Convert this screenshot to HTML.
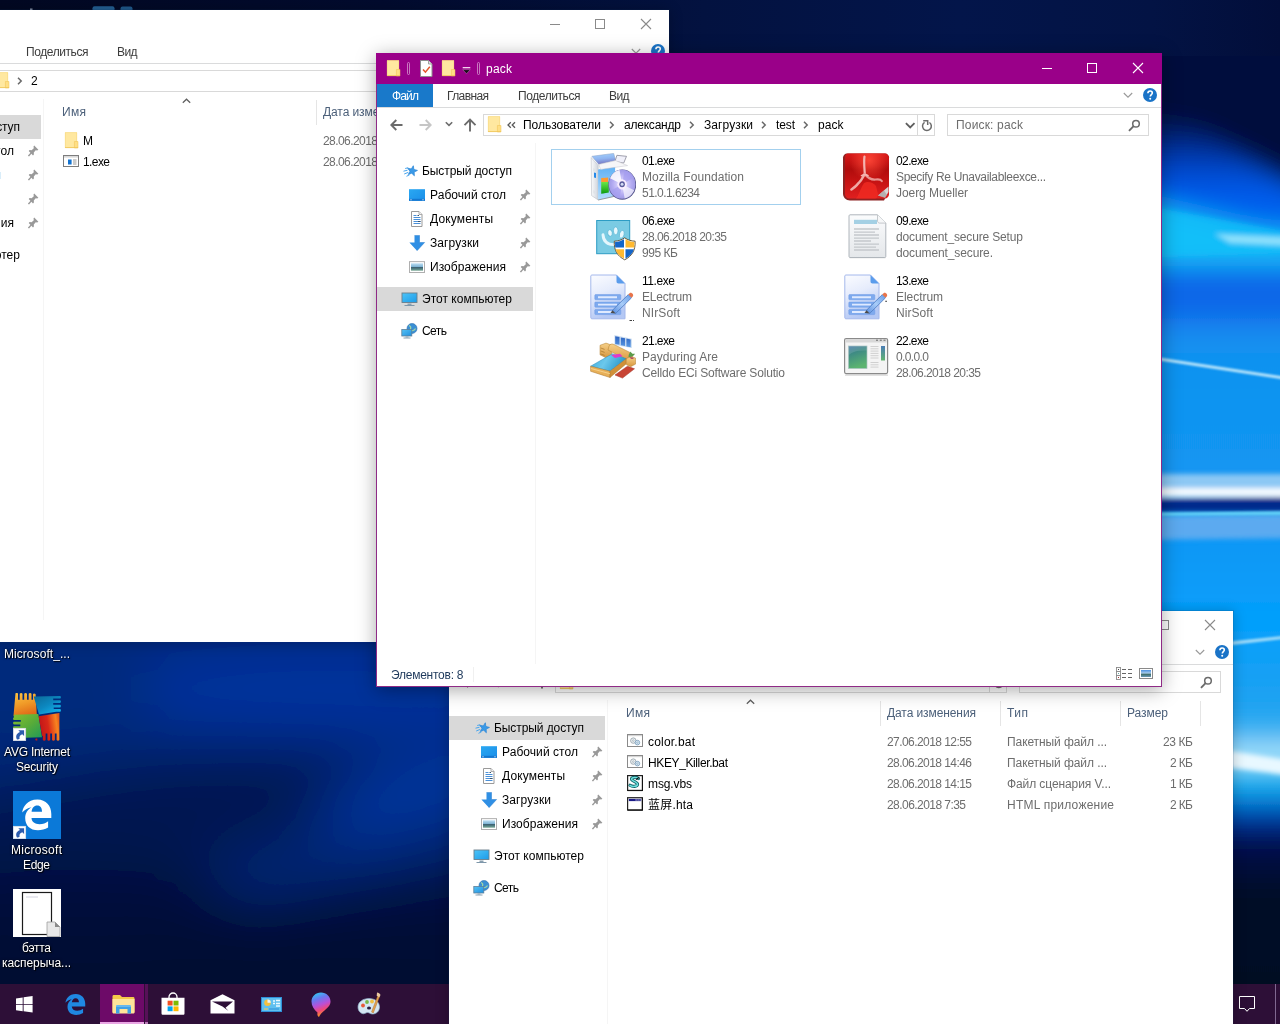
<!DOCTYPE html>
<html lang="ru">
<head>
<meta charset="utf-8">
<title>Desktop</title>
<style>
html,body{margin:0;padding:0;background:#03082a;}
body{width:1280px;height:1024px;overflow:hidden;font-family:"Liberation Sans","Noto Sans CJK SC",sans-serif;font-size:12px;}
#screen{position:relative;width:1280px;height:1024px;overflow:hidden;}
#screen div,#screen span.t,#screen svg.i{position:absolute;}
span.t{will-change:transform;white-space:nowrap;line-height:16px;font-size:12px;color:#000;}
.win{background:#fff;overflow:hidden;}
.dt{color:#fff;text-shadow:1px 1px 2px rgba(0,0,0,.9),0 0 3px rgba(0,0,0,.6);}

</style>
</head>
<body>
<div id="screen">
<svg class="i" style="left:0;top:0" width="1280" height="1024" viewBox="0 0 1280 1024">
<defs>
<linearGradient id="wl" gradientUnits="userSpaceOnUse" x1="0" y1="0" x2="0" y2="1024">
<stop offset="0" stop-color="#03092c"/><stop offset="0.05" stop-color="#030b33"/>
<stop offset="0.62" stop-color="#04287c"/><stop offset="0.66" stop-color="#042d88"/>
<stop offset="0.76" stop-color="#042572"/><stop offset="0.84" stop-color="#03154c"/>
<stop offset="0.90" stop-color="#020b36"/><stop offset="1" stop-color="#020930"/></linearGradient>
<linearGradient id="wt" x1="0" y1="0" x2="1" y2="0">
<stop offset="0" stop-color="#020822"/><stop offset="0.3" stop-color="#020b2e"/>
<stop offset="0.55" stop-color="#031240"/><stop offset="0.75" stop-color="#03154a"/>
<stop offset="0.9" stop-color="#031344"/><stop offset="1" stop-color="#020e3a"/></linearGradient>
<linearGradient id="wr" gradientUnits="userSpaceOnUse" x1="0" y1="0" x2="0" y2="1024">
<stop offset="0" stop-color="#031240"/><stop offset="0.10" stop-color="#03113e"/>
<stop offset="0.122" stop-color="#031a5a"/><stop offset="0.146" stop-color="#03309a"/>
<stop offset="0.166" stop-color="#0448cc"/><stop offset="0.190" stop-color="#055cec"/>
<stop offset="0.218" stop-color="#0562ee"/><stop offset="0.228" stop-color="#10b0f6"/>
<stop offset="0.244" stop-color="#14b8f6"/><stop offset="0.256" stop-color="#0c80ec"/>
<stop offset="0.266" stop-color="#0868e8"/><stop offset="0.305" stop-color="#0868e8"/>
<stop offset="0.325" stop-color="#1c8ef0"/><stop offset="0.345" stop-color="#1092f0"/>
<stop offset="0.46" stop-color="#1296f2"/><stop offset="0.54" stop-color="#0c98f6"/>
<stop offset="0.61" stop-color="#04a0fc"/><stop offset="0.66" stop-color="#16a0f4"/><stop offset="0.70" stop-color="#22a4f0"/>
<stop offset="0.725" stop-color="#58c0f4"/>
<stop offset="0.738" stop-color="#e0f6ff"/><stop offset="0.75" stop-color="#30c4f6"/>
<stop offset="0.775" stop-color="#089ce8"/><stop offset="0.795" stop-color="#0440b0"/>
<stop offset="0.82" stop-color="#021050"/><stop offset="0.87" stop-color="#020928"/>
<stop offset="1" stop-color="#020622"/></linearGradient>
<filter id="b15" filterUnits="userSpaceOnUse" x="-400" y="-400" width="2100" height="1850"><feGaussianBlur stdDeviation="12"/></filter>
<filter id="b3" filterUnits="userSpaceOnUse" x="-400" y="-400" width="2100" height="1850"><feGaussianBlur stdDeviation="2.5"/></filter>
<filter id="b1" filterUnits="userSpaceOnUse" x="-400" y="-400" width="2100" height="1850"><feGaussianBlur stdDeviation="0.8"/></filter>
<filter id="b30" filterUnits="userSpaceOnUse" x="-400" y="-400" width="2100" height="1850"><feGaussianBlur stdDeviation="28"/></filter>
</defs>
<rect x="0" y="0" width="1280" height="1024" fill="url(#wl)"/>
<rect x="0" y="0" width="1280" height="70" fill="url(#wt)"/>
<rect x="92.5" y="6.3" width="22" height="5" rx="2" fill="#235f92"/><rect x="120.5" y="6.5" width="12" height="5" rx="2" fill="#1f588a"/><rect x="30" y="8.5" width="2.5" height="2" fill="#8a93a8"/>
<svg x="0" y="600" width="470" height="424" viewBox="0 600 470 424">
<g filter="url(#b30)">
<rect x="-300" y="300" width="1100" height="1000" fill="url(#wl)"/>
<ellipse cx="330" cy="690" rx="220" ry="45" fill="#04339c"/>
<ellipse cx="40" cy="690" rx="110" ry="50" fill="#04297c"/>
<ellipse cx="140" cy="800" rx="230" ry="36" fill="#03174f" transform="rotate(-8 140 800)"/>
<ellipse cx="420" cy="790" rx="110" ry="30" fill="#05369e" transform="rotate(-15 420 790)"/>
<ellipse cx="330" cy="862" rx="200" ry="20" fill="#052a80" transform="rotate(-12 330 862)"/>
<ellipse cx="80" cy="900" rx="160" ry="30" fill="#020d3a"/>
<ellipse cx="230" cy="990" rx="400" ry="45" fill="#020a32"/>
</g>
</svg>
<svg x="1150" y="56" width="130" height="968" viewBox="1150 56 130 968">
<g filter="url(#b15)">
<rect x="900" y="-200" width="700" height="1500" fill="url(#wr)"/>
<polygon points="1100,-100 1400,-100 1400,250 1200,132 1100,108" fill="#030f3c"/>
<polygon points="1100,190 1400,260 1400,266 1100,266" fill="#12b8f8"/>
<polygon points="1100,270 1400,270 1400,305 1100,305" fill="#0866e8"/>
</g>
<g filter="url(#b3)">
<polygon points="1130,203 1310,236 1310,252 1130,258" fill="#16c2fa" opacity=".7"/>
<polygon points="1215,234 1310,238 1310,247 1230,243" fill="#d8f8ff" opacity=".6"/>
<polygon points="1130,474 1310,474 1310,490 1130,490" fill="#8cc8f4"/>
<polygon points="1130,488 1310,488 1310,497 1130,497" fill="#f4faff"/>
<polygon points="1130,499 1310,497 1310,512 1130,512" fill="#022a8c"/>
<polygon points="1130,516 1310,514 1310,538 1130,540" fill="#5caaf0"/>
</g>
<g filter="url(#b1)">
<polygon points="1130,353 1310,380.5 1310,383.5 1130,356" fill="#b8e4fb"/>
<polygon points="1130,513 1310,511 1310,515 1130,516" fill="#60d0f8"/>
<polygon points="1215,643 1310,633 1310,636 1215,647" fill="#9ad8f8"/>
</g>
<g filter="url(#b3)">
<polygon points="1210,748 1310,763 1310,778 1210,765" fill="#e8f8ff"/>
</g>
</svg>
</svg>
<span class="t" style="left:4px;top:646px;color:#fff;letter-spacing:0.053px;text-shadow:1px 1px 1px rgba(0,0,0,.95),0 0 3px rgba(0,0,0,.75);">Microsoft_...</span>
<svg class="i" style="left:13px;top:693px;" width="48" height="48" viewBox="0 0 48 48"><defs><linearGradient id="g1" x1="0.2" y1="0" x2="0.5" y2="1"><stop offset="0" stop-color="#fbc040"/><stop offset="0.5" stop-color="#f09a28"/><stop offset="1" stop-color="#e06a18"/></linearGradient><linearGradient id="g2" x1="0" y1="0" x2="0.8" y2="1"><stop offset="0" stop-color="#0c6898"/><stop offset="0.550" stop-color="#0c88c0"/><stop offset="1" stop-color="#14b4ec"/></linearGradient><linearGradient id="g3" x1="0" y1="0" x2="1" y2="1"><stop offset="0" stop-color="#84c030"/><stop offset="0.5" stop-color="#5aac38"/><stop offset="1" stop-color="#209a58"/></linearGradient><linearGradient id="g4" x1="0" y1="0.5" x2="1" y2="0.3"><stop offset="0" stop-color="#c01418"/><stop offset="0.450" stop-color="#d82818"/><stop offset="0.850" stop-color="#f88420"/><stop offset="1" stop-color="#e85a18"/></linearGradient></defs><path d="M2.5 0.300c1-0.8 2.2-0.5 2.5 0.500v6h1.700v-6c0.5-1 2.3-1 2.8 0v6h1.700v-6c0.5-1 2.3-1 2.8 0v6h1.700v-6c0.5-1 2.3-1 2.8 0v6h1.500v-5.500c0.3-1 1.6-1.2 2.6-0.300l1.3 21.800h-23.400z" fill="url(#g1)"/><path d="M20.7 3.600l26.5-0.600c1 0.3 1 2 0 2.400h-7v1.900h7c1 0.4 1 2.2 0 2.600h-7v1.900h7c1 0.4 1 2.2 0 2.600h-6.500v1.700h6.500c1 0.4 1 2.2 0 2.600h-4l-17.2 2.800z" fill="url(#g2)"/><path d="M0.8 21.800l24.5-0.800l3.7 23.200l-16 0.600v-9h-12.200c-1-0.4-1-2.2 0-2.600h6.500v-1.800h-6.500c-1-0.4-1-2.2 0-2.600h7v-1.800h-7c-1-0.4-1-2.2 0-2.600z" fill="url(#g3)"/><path d="M25.6 23.300l20.8-3.300v27c-0.5 1-2.3 1-2.8 0v-6.500h-1.800v6.500c-0.5 1-2.3 1-2.8 0v-6.500h-1.800v6.500c-0.5 1-2.3 1-2.8 0v-6.500h-1.800v6.500c-0.5 1-2.3 1-2.8 0v-4l-0.7-0.300z" fill="url(#g4)"/><path d="M22.8 47.500c-0.6-0.5-0.6-1.5 0-2h1.500v2z" fill="#c81818"/><rect x="0.2" y="35.2" width="12.6" height="12.6" fill="#fff" stroke="#d8dce4" stroke-width="0.5"/><path d="M3.8 46.2c-1.5-3.5 0-6 3.2-7.200l-1.7-1.800h5.800v5.800l-1.8-1.800c-2.4 0.8-3.2 2.4-2.7 4.600c-1 0.6-2 0.8-2.8 0.400z" fill="#2c5cae"/></svg>
<span class="t" style="left:4px;top:744px;color:#fff;letter-spacing:-0.226px;text-shadow:1px 1px 1px rgba(0,0,0,.95),0 0 3px rgba(0,0,0,.75);">AVG Internet</span>
<span class="t" style="left:16px;top:759px;color:#fff;letter-spacing:-0.194px;text-shadow:1px 1px 1px rgba(0,0,0,.95),0 0 3px rgba(0,0,0,.75);">Security</span>
<svg class="i" style="left:13px;top:791px;" width="48" height="48" viewBox="0 0 48 48"><rect x="0" y="0" width="48" height="48" fill="#0b79d8"/><path d="M9.2 21.4C10 16 14 8.6 24.5 8.6C33 8.6 38.3 15 38.3 23L38.3 27L18.5 27C18.8 31 22 33.2 26.5 33.2C30 33.2 32.8 32.2 35.1 30.300L35.1 36.600C32 38.4 28.5 39.3 25 39.300C17 39.3 12.2 34.2 12.2 27.2C12.2 22.5 14.5 18.5 18.5 16.200C14.5 17 11.5 18.8 9.2 21.400ZM18.6 20.800C19 17 21 14.6 24.2 14.600C27.5 14.6 29 17 29 20.800Z" fill="#fff" fill-rule="evenodd" transform="translate(0 0) scale(1)"/><rect x="0.2" y="35.2" width="12.6" height="12.6" fill="#fff" stroke="#d8dce4" stroke-width="0.5"/><path d="M3.8 46.2c-1.5-3.5 0-6 3.2-7.200l-1.7-1.800h5.800v5.800l-1.8-1.800c-2.4 0.8-3.2 2.4-2.7 4.600c-1 0.6-2 0.8-2.8 0.400z" fill="#2c5cae"/></svg>
<span class="t" style="left:11px;top:842px;color:#fff;letter-spacing:0.289px;text-shadow:1px 1px 1px rgba(0,0,0,.95),0 0 3px rgba(0,0,0,.75);">Microsoft</span>
<span class="t" style="left:23px;top:857px;color:#fff;letter-spacing:-0.344px;text-shadow:1px 1px 1px rgba(0,0,0,.95),0 0 3px rgba(0,0,0,.75);">Edge</span>
<svg class="i" style="left:13px;top:889px;" width="48" height="48" viewBox="0 0 48 48"><rect x="0" y="0" width="48" height="48" fill="#fff"/><rect x="9.5" y="3.5" width="29" height="42" fill="#fff" stroke="#1a1a1a" stroke-width="1.2"/><path d="M13 8h12" stroke="#c8c8d8" stroke-width="0.8"/><path d="M34 33h8l5 5v9.500h-13z" fill="#e8e8e8" stroke="#a0a0a0" stroke-width="0.8"/><path d="M42 33v5h5z" fill="#8a8a8a"/></svg>
<span class="t" style="left:22px;top:940px;color:#fff;letter-spacing:-0.285px;text-shadow:1px 1px 1px rgba(0,0,0,.95),0 0 3px rgba(0,0,0,.75);">бэтта</span>
<span class="t" style="left:2px;top:955px;color:#fff;letter-spacing:-0.054px;text-shadow:1px 1px 1px rgba(0,0,0,.95),0 0 3px rgba(0,0,0,.75);">касперыча...</span>
<div style="left:0px;top:984px;width:1280px;height:40px;background:#2d0f37;"></div>
<div style="left:100px;top:984px;width:44px;height:40px;background:#6d0a68;"></div>
<div style="left:144px;top:984px;width:1px;height:40px;background:#2d0f37;"></div>
<div style="left:145px;top:984px;width:3px;height:40px;background:#571058;"></div>
<div style="left:100px;top:1022px;width:44px;height:2px;background:#e9a6e4;"></div>
<div style="left:145px;top:1022px;width:3px;height:2px;background:#b879b6;"></div>
<svg class="i" style="left:15.6px;top:995.8px;" width="17" height="17" viewBox="0 0 17 17"><path d="M0 2.400l6.7-0.950v6.450h-6.700zM7.6 1.300l9-1.300v7.900h-9zM0 8.700h6.700v6.450l-6.7-0.950zM7.6 8.700h9v7.900l-9-1.300z" fill="#fff"/></svg>
<svg class="i" style="left:65px;top:992.5px;" width="22" height="24" viewBox="0 0 22 24"><path d="M9.2 21.4C10 16 14 8.6 24.5 8.6C33 8.6 38.3 15 38.3 23L38.3 27L18.5 27C18.8 31 22 33.2 26.5 33.2C30 33.2 32.8 32.2 35.1 30.300L35.1 36.600C32 38.4 28.5 39.3 25 39.300C17 39.3 12.2 34.2 12.2 27.2C12.2 22.5 14.5 18.5 18.5 16.200C14.5 17 11.5 18.8 9.2 21.400ZM18.6 20.800C19 17 21 14.6 24.2 14.600C27.5 14.6 29 17 29 20.800Z" fill="#1f88e2" fill-rule="evenodd" transform="translate(-5.8 -4.8) scale(0.68)"/></svg>
<svg class="i" style="left:112px;top:994px;" width="23" height="20" viewBox="0 0 23 20"><path d="M0.5 2.500c0-1 0.5-1.5 1.5-1.500h6l2 2h11c1 0 1.5 0.5 1.5 1.500v14h-22z" fill="#f4c84a"/><path d="M0.5 5h22v13c0 1-0.5 1.5-1.5 1.500h-19c-1 0-1.5-0.5-1.5-1.500z" fill="#ffe39a"/><path d="M4 19.500v-7c0-1 0.5-1.5 1.5-1.500h12c1 0 1.5 0.5 1.5 1.500v7h-3.500v-4.500h-8v4.500z" fill="#3fa0e4"/><path d="M4 12h15" stroke="#8fd0f4" stroke-width="1"/></svg>
<svg class="i" style="left:161px;top:992px;" width="24" height="24" viewBox="0 0 24 24"><path d="M8 6.500v-1.500a4 4 0 0 1 8 0v1.5" fill="none" stroke="#fff" stroke-width="1.3"/><path d="M0.5 5.700h23v15.500c0 1-0.5 1.5-1.5 1.500h-20c-1 0-1.5-0.5-1.5-1.500z" fill="#fff"/><rect x="6.6" y="8.7" width="5" height="4.8" fill="#f25022"/><rect x="12.5" y="8.7" width="5" height="4.8" fill="#7fba00"/><rect x="6.6" y="14.4" width="5" height="4.8" fill="#00a4ef"/><rect x="12.5" y="14.4" width="5" height="4.8" fill="#ffb900"/></svg>
<svg class="i" style="left:209.5px;top:993.8px;" width="25" height="20" viewBox="0 0 25 20"><path d="M0.5 6.300l12-6.100l12 6.100v13.200h-24z" fill="#fff"/><path d="M2 7.500h21l-7.5 6.300l3 3.200l-6-4.500z" fill="#2d0f37"/></svg>
<svg class="i" style="left:260.5px;top:996.5px;" width="22" height="16" viewBox="0 0 22 16"><rect x="0.5" y="0.5" width="20" height="14" fill="#5fc0f0" stroke="#2f90d8" stroke-width="1"/><circle cx="6.5" cy="5.8" r="3.3" fill="#f4c040"/><path d="M6.5 5.800v-3.300a3.3 3.3 0 0 1 3.3 3.300z" fill="#e8f4fc"/><path d="M12 4h2M15 3.500h4M12 6.500h2M15 6.500h4M15 9h4" stroke="#e8f8ff" stroke-width="1.4"/><path d="M3 12h4" stroke="#e8c860" stroke-width="1.2"/><path d="M8 12h10" stroke="#2f90d8" stroke-width="1"/></svg>
<svg class="i" style="left:310.5px;top:991.7px;" width="20" height="26" viewBox="0 0 20 26"><defs><linearGradient id="g5" x1="0.3" y1="0" x2="0.6" y2="1"><stop offset="0" stop-color="#30c8f0"/><stop offset="0.250" stop-color="#6a78f0"/><stop offset="0.5" stop-color="#b850d8"/><stop offset="0.720" stop-color="#f04878"/><stop offset="0.9" stop-color="#f88a30"/><stop offset="1" stop-color="#f8b030"/></linearGradient></defs><path d="M10 0.500c5.5 0 9.5 4 9.5 9c0 4-3 6.5-6 9c-2.5 2-4.5 4-5.5 6.500c-1.5-1-2-2.5-1.5-4.500c-3.5-3-6-6.5-6-11c0-5 4-9 9.5-9z" fill="url(#g5)"/></svg>
<svg class="i" style="left:356.5px;top:992px;" width="26" height="26" viewBox="0 0 26 26"><path d="M12 6.500c6 0 10.5 3.5 10.5 8.500c0 4.5-3.5 7-7 7c-2.5 0-3-1.5-5-1.500c-2 0-3 2-5.5 1c-3-1.2-4-4-4-6.500c0-5 5-8.5 11-8.500z" fill="#d4e6f2" stroke="#8fb0c8" stroke-width="0.7"/><circle cx="6" cy="13.5" r="1.9" fill="#e85a3a"/><circle cx="10" cy="10" r="1.9" fill="#78b848"/><circle cx="15" cy="9.5" r="1.9" fill="#f0c040"/><ellipse cx="12" cy="16" rx="2" ry="1.6" fill="#2b2040"/><path d="M21 3l1.8 1l-6.5 17l-1.8-1z" fill="#e0a050" stroke="#a86a20" stroke-width="0.4"/><path d="M20 0.500c1.5 0 3 1 3.5 2.500l-1.2 2.200l-2.6-1.400z" fill="#e8c8a0"/></svg>
<svg class="i" style="left:1239px;top:996px;" width="17" height="18" viewBox="0 0 17 18"><path d="M0.5 0.5h15v12h-5l-2.5 2.800l-2.5-2.800h-5z" fill="none" stroke="#fff" stroke-width="1"/></svg>
<div style="left:1275px;top:984px;width:1px;height:40px;background:#806890;"></div>
<div style="left:-116px;top:9px;width:786px;height:634px;box-shadow:0 1px 12px rgba(0,0,0,.22);"><div class="win" style="left:1px;top:1px;width:784px;height:632px;"><div style="left:-377px;top:-54px;width:786px;height:634px;"><div style="left:376px;top:53px;width:786px;height:31px;background:#fff;"></div>
<svg class="i" style="left:386px;top:60px;" width="16" height="17" viewBox="0 0 16 17"><path d="M1 0.3h12v15.7h-12z" fill="#ffe8a0"/><path d="M1.3 0.6h11.4v15.1h-11.4z" fill="none" stroke="#f7d77e" stroke-width="0.6"/><path d="M10.4 9.5h3.6v6.5h-3.600z" fill="#ffdf85" stroke="#efc050" stroke-width="0.5"/><path d="M1 15.3h13v0.7h-13z" fill="#efc558"/></svg>
<div style="left:407px;top:62px;width:3px;height:13px;border:1px solid #d0d0d0;box-sizing:border-box;border-radius:1.5px;opacity:.8;"></div>
<svg class="i" style="left:420px;top:60px;" width="13" height="17" viewBox="0 0 13 17"><path d="M0.5 0.5h8l3.5 3.5v12.5h-11.5z" fill="#fff" stroke="#8f8f8f" stroke-width="1"/><path d="M8.5 0.5v3.5h3.5" fill="#e6e6e6" stroke="#8f8f8f" stroke-width="0.8"/><path d="M3 9.5l2.4 2.6l4.4-5.4" fill="none" stroke="#e4572e" stroke-width="1.5"/></svg>
<svg class="i" style="left:441px;top:60px;" width="16" height="17" viewBox="0 0 16 17"><path d="M1 0.3h12v15.7h-12z" fill="#ffe8a0"/><path d="M1.3 0.6h11.4v15.1h-11.4z" fill="none" stroke="#f7d77e" stroke-width="0.6"/><path d="M10.4 9.5h3.6v6.5h-3.600z" fill="#ffdf85" stroke="#efc050" stroke-width="0.5"/><path d="M1 15.3h13v0.7h-13z" fill="#efc558"/></svg>
<svg class="i" style="left:462px;top:66px;" width="9" height="9" viewBox="0 0 9 9"><rect x="0.7" y="1" width="7.6" height="1.3" fill="#777"/><path d="M0.7 3.700h7.600l-3.8 4z" fill="#777"/></svg>
<div style="left:477px;top:62px;width:3px;height:13px;border:1px solid #d0d0d0;box-sizing:border-box;border-radius:1.5px;opacity:.8;"></div>
<svg class="i" style="left:1041px;top:62px;" width="12" height="12" viewBox="0 0 12 12"><path d="M1 6.5h10" stroke="#8a8a8a" stroke-width="1"/></svg><svg class="i" style="left:1086px;top:62px;" width="12" height="12" viewBox="0 0 12 12"><rect x="1.5" y="1.5" width="9" height="9" fill="none" stroke="#8a8a8a" stroke-width="1"/></svg><svg class="i" style="left:1132px;top:62px;" width="12" height="12" viewBox="0 0 12 12"><path d="M1 1l10 10M11 1l-10 10" stroke="#8a8a8a" stroke-width="1.1" fill="none"/></svg>
<div style="left:377px;top:84px;width:56px;height:23px;background:#1979ca;"></div>
<span class="t" style="left:392px;top:88px;color:#fff;letter-spacing:-0.839px;">Файл</span>
<span class="t" style="left:447px;top:88px;color:#3c3c3c;letter-spacing:-0.615px;">Главная</span>
<span class="t" style="left:518px;top:88px;color:#3c3c3c;letter-spacing:-0.418px;">Поделиться</span>
<span class="t" style="left:609px;top:88px;color:#3c3c3c;letter-spacing:-0.609px;">Вид</span>
<div style="left:377px;top:107px;width:784px;height:1px;background:#dadbdc;"></div>
<svg class="i" style="left:1123px;top:92px;" width="10" height="7" viewBox="0 0 10 7"><path d="M0.8 1l4.2 4.2l4.2-4.2" fill="none" stroke="#999" stroke-width="1.1"/></svg>
<svg class="i" style="left:1143px;top:88px;" width="14" height="14" viewBox="0 0 14 14"><circle cx="7" cy="7" r="7" fill="#1a73c7"/><path d="M4.9 5.3c0-1.5 1-2.3 2.2-2.3c1.3 0 2.2 0.8 2.2 1.9c0 1.6-2 1.7-2 3.5" fill="none" stroke="#fff" stroke-width="1.6"/><circle cx="7.2" cy="10.7" r="1" fill="#fff"/></svg>
<svg class="i" style="left:390px;top:119px;" width="13" height="12" viewBox="0 0 13 12"><path d="M12.5 6h-11M6.3 1l-5 5l5 5" fill="none" stroke="#6b6b6b" stroke-width="1.9"/></svg>
<svg class="i" style="left:419px;top:119px;" width="13" height="12" viewBox="0 0 13 12"><path d="M0.5 6h11M6.7 1l5 5l-5 5" fill="none" stroke="#c6c6c6" stroke-width="1.9"/></svg>
<svg class="i" style="left:445px;top:121px;" width="8" height="6" viewBox="0 0 8 6"><path d="M0.8 1.200l3.2 3.200l3.2-3.2" fill="none" stroke="#6e6e6e" stroke-width="1.6"/></svg>
<svg class="i" style="left:463px;top:118px;" width="14" height="14" viewBox="0 0 14 14"><path d="M7 13.500v-11.500M1.5 7.200l5.5-5.500l5.5 5.5" fill="none" stroke="#6b6b6b" stroke-width="1.9"/></svg>
<div style="left:483px;top:114px;width:452px;height:22px;border:1px solid #d9d9d9;box-sizing:border-box;background:#fff;"></div>
<div style="left:917px;top:115px;width:1px;height:20px;background:#d9d9d9;"></div>
<svg class="i" style="left:487px;top:116px;" width="16" height="17" viewBox="0 0 16 17"><path d="M1 0.3h12v15.7h-12z" fill="#ffe8a0"/><path d="M1.3 0.6h11.4v15.1h-11.4z" fill="none" stroke="#f7d77e" stroke-width="0.6"/><path d="M10.4 9.5h3.6v6.5h-3.600z" fill="#ffdf85" stroke="#efc050" stroke-width="0.5"/><path d="M1 15.3h13v0.7h-13z" fill="#efc558"/></svg>
<svg class="i" style="left:509px;top:121px;" width="6" height="8" viewBox="0 0 6 8"><path d="M1 0.800l3.2 3.200l-3.2 3.2" fill="none" stroke="#686868" stroke-width="1.5"/></svg>
<span class="t" style="left:523px;top:117px;letter-spacing:0.312px;">2</span>
<svg class="i" style="left:904.7px;top:122.3px;" width="11" height="8" viewBox="0 0 11 8"><path d="M0.9 1.200l4.3 4.300l4.3-4.3" fill="none" stroke="#5e5e5e" stroke-width="1.8"/></svg>
<svg class="i" style="left:920px;top:118px;" width="14" height="14" viewBox="0 0 14 14"><path d="M9.4 4.500A4.4 4.4 0 1 1 4.6 4.4" fill="none" stroke="#6b6b6b" stroke-width="1.5"/><path d="M3.2 2.700h4.500v4.3" fill="none" stroke="#6b6b6b" stroke-width="1.5"/></svg>
<div style="left:947px;top:114px;width:202px;height:22px;border:1px solid #d9d9d9;box-sizing:border-box;background:#fff;"></div>
<svg class="i" style="left:1128px;top:119px;" width="13" height="13" viewBox="0 0 13 13"><circle cx="8" cy="4.7" r="3.3" fill="none" stroke="#6b6b6b" stroke-width="1.5"/><path d="M5.6 7.2l-4.6 4.6" stroke="#6b6b6b" stroke-width="1.9" fill="none"/></svg>
<div style="left:377px;top:159px;width:156px;height:24px;background:#d9d9d9;"></div>
<svg class="i" style="left:402px;top:163px;" width="17" height="16" viewBox="0 0 17 16"><path d="M10.2 2.600l1.3 3.500l3.7 0.200l-2.9 2.300l1 3.600l-3.1-2l-3.1 2l1-3.600l-2.9-2.300l3.7-0.200z" fill="#3a9ae8" stroke="#2c86d6" stroke-width="0.7" transform="rotate(12 10 8)"/><path d="M3.2 5.500l3-0.800M1.5 8.200l4-1M2.2 11l4-1.600M4.5 13.300l3-1.5" stroke="#4aa6ee" stroke-width="1"/></svg>
<span class="t" style="left:422px;top:163px;letter-spacing:-0.088px;">Быстрый доступ</span>
<svg class="i" style="left:409px;top:187px;" width="17" height="16" viewBox="0 0 17 16"><defs><linearGradient id="g6" x1="0" y1="0" x2="1" y2="1"><stop offset="0" stop-color="#2aa8f2"/><stop offset="1" stop-color="#1a8ee8"/></linearGradient></defs><rect x="0" y="2.2" width="16" height="11.6" fill="url(#g6)"/><rect x="0" y="11.8" width="16" height="2" fill="#1477d0"/><rect x="1.5" y="12.3" width="1" height="1" fill="#fff"/><rect x="13.5" y="12.3" width="1" height="1" fill="#fff"/></svg>
<span class="t" style="left:430px;top:187px;letter-spacing:0.061px;">Рабочий стол</span>
<svg class="i" style="left:520px;top:189px;" width="11" height="12" viewBox="0 0 11 12"><path d="M6.2 0.600l4.2 4.200l-1.2 0.800l-1.5-0.300l-1.9 2.200l0.1 2l-0.9 0.900l-4.3-4.500l0.9-0.800l2 0.100l2.2-1.900l-0.3-1.700z" fill="#999"/><path d="M3.5 7.600l-3 3.5" stroke="#999" stroke-width="1.4"/></svg>
<svg class="i" style="left:409px;top:211px;" width="17" height="16" viewBox="0 0 17 16"><path d="M2.5 0.500h7.500l3 3v12h-10.500z" fill="#fff" stroke="#9a9a9a" stroke-width="1"/><path d="M10 0.500v3h3" fill="#f4f4f4" stroke="#9a9a9a" stroke-width="0.8"/><path d="M4.5 4.500h3M4.5 6.500h7M4.5 8.500h7M4.5 10.500h7M4.5 12.500h7" stroke="#4a90d8" stroke-width="1"/><path d="M8.5 4.500h1.500M9 10.500h2.5" stroke="#35506a" stroke-width="1"/></svg>
<span class="t" style="left:430px;top:211px;color:#8ec9ee;letter-spacing:0.143px;">Документы</span>
<svg class="i" style="left:520px;top:213px;" width="11" height="12" viewBox="0 0 11 12"><path d="M6.2 0.600l4.2 4.200l-1.2 0.800l-1.5-0.300l-1.9 2.200l0.1 2l-0.9 0.900l-4.3-4.500l0.9-0.800l2 0.100l2.2-1.900l-0.3-1.700z" fill="#999"/><path d="M3.5 7.600l-3 3.5" stroke="#999" stroke-width="1.4"/></svg>
<svg class="i" style="left:409px;top:235px;" width="17" height="16" viewBox="0 0 17 16"><path d="M5.5 0.400h5v7.100h5.100l-7.6 8.300l-7.6-8.300h5.100z" fill="#2f8fe4"/><path d="M5.5 0.400h5v7.100h5.100l-7.6 8.3" fill="none" stroke="#2279cc" stroke-width="0.5"/></svg>
<span class="t" style="left:430px;top:235px;letter-spacing:0.100px;">Загрузки</span>
<svg class="i" style="left:520px;top:237px;" width="11" height="12" viewBox="0 0 11 12"><path d="M6.2 0.600l4.2 4.200l-1.2 0.800l-1.5-0.300l-1.9 2.200l0.1 2l-0.9 0.900l-4.3-4.500l0.9-0.800l2 0.100l2.2-1.900l-0.3-1.700z" fill="#999"/><path d="M3.5 7.600l-3 3.5" stroke="#999" stroke-width="1.4"/></svg>
<svg class="i" style="left:409px;top:259px;" width="17" height="16" viewBox="0 0 17 16"><defs><linearGradient id="g7" x1="0" y1="0" x2="0" y2="1"><stop offset="0" stop-color="#bfe0f4"/><stop offset="0.450" stop-color="#7fb4d4"/><stop offset="0.550" stop-color="#3f6474"/><stop offset="0.8" stop-color="#5a8a86"/><stop offset="1" stop-color="#a8c8b8"/></linearGradient></defs><rect x="0.4" y="2.7" width="15.2" height="10.8" fill="#fff" stroke="#9c9c9c" stroke-width="0.8"/><rect x="2" y="4.3" width="12" height="7.6" fill="url(#g7)"/></svg>
<span class="t" style="left:430px;top:259px;letter-spacing:0.058px;">Изображения</span>
<svg class="i" style="left:520px;top:261px;" width="11" height="12" viewBox="0 0 11 12"><path d="M6.2 0.600l4.2 4.200l-1.2 0.800l-1.5-0.300l-1.9 2.200l0.1 2l-0.9 0.900l-4.3-4.500l0.9-0.800l2 0.100l2.2-1.900l-0.3-1.700z" fill="#999"/><path d="M3.5 7.600l-3 3.5" stroke="#999" stroke-width="1.4"/></svg>
<svg class="i" style="left:401px;top:291px;" width="17" height="16" viewBox="0 0 17 16"><defs><linearGradient id="g8" x1="0" y1="0" x2="1" y2="1"><stop offset="0" stop-color="#4cc4f8"/><stop offset="1" stop-color="#1d9be8"/></linearGradient></defs><rect x="1" y="2" width="15" height="9.5" fill="url(#g8)" stroke="#6a7e8c" stroke-width="0.9"/><path d="M6.5 12.5h4v1.500h-4z" fill="#8aa0b0"/><path d="M3.5 14.500h10" stroke="#7e97aa" stroke-width="1"/></svg>
<span class="t" style="left:422px;top:291px;letter-spacing:0.020px;">Этот компьютер</span>
<svg class="i" style="left:401px;top:323px;" width="17" height="16" viewBox="0 0 17 16"><defs><linearGradient id="g9" x1="0" y1="0" x2="1" y2="1"><stop offset="0" stop-color="#55c2f5"/><stop offset="1" stop-color="#1f8fdf"/></linearGradient></defs><circle cx="11" cy="5.5" r="5" fill="#3a8fd4" stroke="#2b6fae" stroke-width="0.6"/><path d="M8 2.500c1.5 0.5 2 2 1.5 3.500s1 2 2.5 1.500c1-0.3 2-1 2.5-2" fill="none" stroke="#9fd6a6" stroke-width="1.2"/><rect x="0.8" y="6.5" width="10" height="6.5" fill="url(#g9)" stroke="#5d7f99" stroke-width="0.8"/><path d="M4.5 13.500h3v1h-3z" fill="#8aa0b0"/><path d="M2.5 15h7" stroke="#7e97aa" stroke-width="0.9"/></svg>
<span class="t" style="left:422px;top:323px;letter-spacing:-0.568px;">Сеть</span>
<div style="left:535px;top:143px;width:1px;height:521px;background:#f5f5f5;"></div>
<span class="t" style="left:554px;top:148px;color:#4c607a;letter-spacing:0.312px;">Имя</span>
<div style="left:808px;top:144px;width:1px;height:25px;background:#e5e5e5;"></div>
<span class="t" style="left:815px;top:148px;color:#4c607a;letter-spacing:-0.090px;">Дата изменения</span>
<svg class="i" style="left:674.2px;top:142px;" width="9" height="6" viewBox="0 0 9 6"><path d="M0.8 4.8l3.7-3.600l3.7 3.6" fill="none" stroke="#5e5e5e" stroke-width="1.2"/></svg>
<svg class="i" style="left:555.7px;top:176px;" width="16" height="17" viewBox="0 0 16 17"><path d="M1 0.3h12v15.7h-12z" fill="#ffe8a0"/><path d="M1.3 0.6h11.4v15.1h-11.4z" fill="none" stroke="#f7d77e" stroke-width="0.6"/><path d="M10.4 9.5h3.6v6.5h-3.600z" fill="#ffdf85" stroke="#efc050" stroke-width="0.5"/><path d="M1 15.3h13v0.7h-13z" fill="#efc558"/></svg>
<span class="t" style="left:575px;top:177px;letter-spacing:1.500px;">M</span>
<span class="t" style="left:815px;top:177px;color:#6d6d6d;letter-spacing:-0.561px;">28.06.2018 20:35</span>
<svg class="i" style="left:555px;top:197px;" width="16" height="16" viewBox="0 0 16 16"><rect x="0.5" y="2.5" width="15" height="11" fill="#fff" stroke="#7d7d7d" stroke-width="1"/><rect x="1" y="3" width="14" height="1.6" fill="#d9d9d9"/><rect x="5" y="6.5" width="3.6" height="5" fill="#1373d0"/><path d="M10 7h3.500M10 9h3.500M10 11h3.5" stroke="#8a8a8a" stroke-width="0.9"/></svg>
<span class="t" style="left:575px;top:198px;letter-spacing:-0.590px;">1.exe</span>
<span class="t" style="left:815px;top:198px;color:#6d6d6d;letter-spacing:-0.561px;">28.06.2018 20:35</span></div></div><div style="left:0;top:0;width:786px;height:634px;border:1px solid rgba(10,30,60,.22);box-sizing:border-box;"></div></div>

<div style="left:448px;top:610px;width:786px;height:634px;box-shadow:0 1px 12px rgba(0,0,0,.22);"><div class="win" style="left:1px;top:1px;width:784px;height:632px;"><div style="left:-377px;top:-54px;width:786px;height:634px;"><div style="left:376px;top:53px;width:786px;height:31px;background:#fff;"></div>
<svg class="i" style="left:386px;top:60px;" width="16" height="17" viewBox="0 0 16 17"><path d="M1 0.3h12v15.7h-12z" fill="#ffe8a0"/><path d="M1.3 0.6h11.4v15.1h-11.4z" fill="none" stroke="#f7d77e" stroke-width="0.6"/><path d="M10.4 9.5h3.6v6.5h-3.600z" fill="#ffdf85" stroke="#efc050" stroke-width="0.5"/><path d="M1 15.3h13v0.7h-13z" fill="#efc558"/></svg>
<div style="left:407px;top:62px;width:3px;height:13px;border:1px solid #d0d0d0;box-sizing:border-box;border-radius:1.5px;opacity:.8;"></div>
<svg class="i" style="left:420px;top:60px;" width="13" height="17" viewBox="0 0 13 17"><path d="M0.5 0.5h8l3.5 3.5v12.5h-11.5z" fill="#fff" stroke="#8f8f8f" stroke-width="1"/><path d="M8.5 0.5v3.5h3.5" fill="#e6e6e6" stroke="#8f8f8f" stroke-width="0.8"/><path d="M3 9.5l2.4 2.6l4.4-5.4" fill="none" stroke="#e4572e" stroke-width="1.5"/></svg>
<svg class="i" style="left:441px;top:60px;" width="16" height="17" viewBox="0 0 16 17"><path d="M1 0.3h12v15.7h-12z" fill="#ffe8a0"/><path d="M1.3 0.6h11.4v15.1h-11.4z" fill="none" stroke="#f7d77e" stroke-width="0.6"/><path d="M10.4 9.5h3.6v6.5h-3.600z" fill="#ffdf85" stroke="#efc050" stroke-width="0.5"/><path d="M1 15.3h13v0.7h-13z" fill="#efc558"/></svg>
<svg class="i" style="left:462px;top:66px;" width="9" height="9" viewBox="0 0 9 9"><rect x="0.7" y="1" width="7.6" height="1.3" fill="#777"/><path d="M0.7 3.700h7.600l-3.8 4z" fill="#777"/></svg>
<div style="left:477px;top:62px;width:3px;height:13px;border:1px solid #d0d0d0;box-sizing:border-box;border-radius:1.5px;opacity:.8;"></div>
<svg class="i" style="left:1041px;top:62px;" width="12" height="12" viewBox="0 0 12 12"><path d="M1 6.5h10" stroke="#8a8a8a" stroke-width="1"/></svg><svg class="i" style="left:1086px;top:62px;" width="12" height="12" viewBox="0 0 12 12"><rect x="1.5" y="1.5" width="9" height="9" fill="none" stroke="#8a8a8a" stroke-width="1"/></svg><svg class="i" style="left:1132px;top:62px;" width="12" height="12" viewBox="0 0 12 12"><path d="M1 1l10 10M11 1l-10 10" stroke="#8a8a8a" stroke-width="1.1" fill="none"/></svg>
<div style="left:377px;top:84px;width:56px;height:23px;background:#1979ca;"></div>
<span class="t" style="left:392px;top:88px;color:#fff;letter-spacing:-0.839px;">Файл</span>
<span class="t" style="left:447px;top:88px;color:#3c3c3c;letter-spacing:-0.615px;">Главная</span>
<span class="t" style="left:518px;top:88px;color:#3c3c3c;letter-spacing:-0.418px;">Поделиться</span>
<span class="t" style="left:609px;top:88px;color:#3c3c3c;letter-spacing:-0.609px;">Вид</span>
<div style="left:377px;top:107px;width:784px;height:1px;background:#dadbdc;"></div>
<svg class="i" style="left:1123px;top:92px;" width="10" height="7" viewBox="0 0 10 7"><path d="M0.8 1l4.2 4.2l4.2-4.2" fill="none" stroke="#999" stroke-width="1.1"/></svg>
<svg class="i" style="left:1143px;top:88px;" width="14" height="14" viewBox="0 0 14 14"><circle cx="7" cy="7" r="7" fill="#1a73c7"/><path d="M4.9 5.3c0-1.5 1-2.3 2.2-2.3c1.3 0 2.2 0.8 2.2 1.9c0 1.6-2 1.7-2 3.5" fill="none" stroke="#fff" stroke-width="1.6"/><circle cx="7.2" cy="10.7" r="1" fill="#fff"/></svg>
<svg class="i" style="left:390px;top:119px;" width="13" height="12" viewBox="0 0 13 12"><path d="M12.5 6h-11M6.3 1l-5 5l5 5" fill="none" stroke="#6b6b6b" stroke-width="1.9"/></svg>
<svg class="i" style="left:419px;top:119px;" width="13" height="12" viewBox="0 0 13 12"><path d="M0.5 6h11M6.7 1l5 5l-5 5" fill="none" stroke="#c6c6c6" stroke-width="1.9"/></svg>
<svg class="i" style="left:445px;top:121px;" width="8" height="6" viewBox="0 0 8 6"><path d="M0.8 1.200l3.2 3.200l3.2-3.2" fill="none" stroke="#6e6e6e" stroke-width="1.6"/></svg>
<svg class="i" style="left:463px;top:118px;" width="14" height="14" viewBox="0 0 14 14"><path d="M7 13.500v-11.500M1.5 7.200l5.5-5.500l5.5 5.5" fill="none" stroke="#6b6b6b" stroke-width="1.9"/></svg>
<div style="left:483px;top:114px;width:452px;height:22px;border:1px solid #d9d9d9;box-sizing:border-box;background:#fff;"></div>
<div style="left:917px;top:115px;width:1px;height:20px;background:#d9d9d9;"></div>
<svg class="i" style="left:487px;top:116px;" width="16" height="17" viewBox="0 0 16 17"><path d="M1 0.3h12v15.7h-12z" fill="#ffe8a0"/><path d="M1.3 0.6h11.4v15.1h-11.4z" fill="none" stroke="#f7d77e" stroke-width="0.6"/><path d="M10.4 9.5h3.6v6.5h-3.600z" fill="#ffdf85" stroke="#efc050" stroke-width="0.5"/><path d="M1 15.3h13v0.7h-13z" fill="#efc558"/></svg>
<svg class="i" style="left:904.7px;top:122.3px;" width="11" height="8" viewBox="0 0 11 8"><path d="M0.9 1.200l4.3 4.300l4.3-4.3" fill="none" stroke="#5e5e5e" stroke-width="1.8"/></svg>
<svg class="i" style="left:920px;top:118px;" width="14" height="14" viewBox="0 0 14 14"><path d="M9.4 4.500A4.4 4.4 0 1 1 4.6 4.4" fill="none" stroke="#6b6b6b" stroke-width="1.5"/><path d="M3.2 2.700h4.500v4.3" fill="none" stroke="#6b6b6b" stroke-width="1.5"/></svg>
<div style="left:947px;top:114px;width:202px;height:22px;border:1px solid #d9d9d9;box-sizing:border-box;background:#fff;"></div>
<svg class="i" style="left:1128px;top:119px;" width="13" height="13" viewBox="0 0 13 13"><circle cx="8" cy="4.7" r="3.3" fill="none" stroke="#6b6b6b" stroke-width="1.5"/><path d="M5.6 7.2l-4.6 4.6" stroke="#6b6b6b" stroke-width="1.9" fill="none"/></svg>
<div style="left:377px;top:159px;width:156px;height:24px;background:#d9d9d9;"></div>
<svg class="i" style="left:402px;top:163px;" width="17" height="16" viewBox="0 0 17 16"><path d="M10.2 2.600l1.3 3.500l3.7 0.200l-2.9 2.300l1 3.600l-3.1-2l-3.1 2l1-3.600l-2.9-2.300l3.7-0.200z" fill="#3a9ae8" stroke="#2c86d6" stroke-width="0.7" transform="rotate(12 10 8)"/><path d="M3.2 5.500l3-0.800M1.5 8.200l4-1M2.2 11l4-1.600M4.5 13.300l3-1.5" stroke="#4aa6ee" stroke-width="1"/></svg>
<span class="t" style="left:422px;top:163px;letter-spacing:-0.088px;">Быстрый доступ</span>
<svg class="i" style="left:409px;top:187px;" width="17" height="16" viewBox="0 0 17 16"><defs><linearGradient id="g10" x1="0" y1="0" x2="1" y2="1"><stop offset="0" stop-color="#2aa8f2"/><stop offset="1" stop-color="#1a8ee8"/></linearGradient></defs><rect x="0" y="2.2" width="16" height="11.6" fill="url(#g10)"/><rect x="0" y="11.8" width="16" height="2" fill="#1477d0"/><rect x="1.5" y="12.3" width="1" height="1" fill="#fff"/><rect x="13.5" y="12.3" width="1" height="1" fill="#fff"/></svg>
<span class="t" style="left:430px;top:187px;letter-spacing:0.061px;">Рабочий стол</span>
<svg class="i" style="left:520px;top:189px;" width="11" height="12" viewBox="0 0 11 12"><path d="M6.2 0.600l4.2 4.200l-1.2 0.800l-1.5-0.300l-1.9 2.200l0.1 2l-0.9 0.900l-4.3-4.500l0.9-0.800l2 0.100l2.2-1.900l-0.3-1.700z" fill="#999"/><path d="M3.5 7.600l-3 3.5" stroke="#999" stroke-width="1.4"/></svg>
<svg class="i" style="left:409px;top:211px;" width="17" height="16" viewBox="0 0 17 16"><path d="M2.5 0.500h7.500l3 3v12h-10.500z" fill="#fff" stroke="#9a9a9a" stroke-width="1"/><path d="M10 0.500v3h3" fill="#f4f4f4" stroke="#9a9a9a" stroke-width="0.8"/><path d="M4.5 4.500h3M4.5 6.500h7M4.5 8.500h7M4.5 10.500h7M4.5 12.500h7" stroke="#4a90d8" stroke-width="1"/><path d="M8.5 4.500h1.500M9 10.500h2.5" stroke="#35506a" stroke-width="1"/></svg>
<span class="t" style="left:430px;top:211px;letter-spacing:0.143px;">Документы</span>
<svg class="i" style="left:520px;top:213px;" width="11" height="12" viewBox="0 0 11 12"><path d="M6.2 0.600l4.2 4.200l-1.2 0.800l-1.5-0.300l-1.9 2.200l0.1 2l-0.9 0.900l-4.3-4.500l0.9-0.800l2 0.100l2.2-1.900l-0.3-1.700z" fill="#999"/><path d="M3.5 7.600l-3 3.5" stroke="#999" stroke-width="1.4"/></svg>
<svg class="i" style="left:409px;top:235px;" width="17" height="16" viewBox="0 0 17 16"><path d="M5.5 0.400h5v7.100h5.100l-7.6 8.300l-7.6-8.300h5.100z" fill="#2f8fe4"/><path d="M5.5 0.400h5v7.100h5.100l-7.6 8.3" fill="none" stroke="#2279cc" stroke-width="0.5"/></svg>
<span class="t" style="left:430px;top:235px;letter-spacing:0.100px;">Загрузки</span>
<svg class="i" style="left:520px;top:237px;" width="11" height="12" viewBox="0 0 11 12"><path d="M6.2 0.600l4.2 4.200l-1.2 0.800l-1.5-0.300l-1.9 2.200l0.1 2l-0.9 0.900l-4.3-4.500l0.9-0.800l2 0.100l2.2-1.900l-0.3-1.700z" fill="#999"/><path d="M3.5 7.600l-3 3.5" stroke="#999" stroke-width="1.4"/></svg>
<svg class="i" style="left:409px;top:259px;" width="17" height="16" viewBox="0 0 17 16"><defs><linearGradient id="g11" x1="0" y1="0" x2="0" y2="1"><stop offset="0" stop-color="#bfe0f4"/><stop offset="0.450" stop-color="#7fb4d4"/><stop offset="0.550" stop-color="#3f6474"/><stop offset="0.8" stop-color="#5a8a86"/><stop offset="1" stop-color="#a8c8b8"/></linearGradient></defs><rect x="0.4" y="2.7" width="15.2" height="10.8" fill="#fff" stroke="#9c9c9c" stroke-width="0.8"/><rect x="2" y="4.3" width="12" height="7.6" fill="url(#g11)"/></svg>
<span class="t" style="left:430px;top:259px;letter-spacing:0.058px;">Изображения</span>
<svg class="i" style="left:520px;top:261px;" width="11" height="12" viewBox="0 0 11 12"><path d="M6.2 0.600l4.2 4.200l-1.2 0.800l-1.5-0.300l-1.9 2.200l0.1 2l-0.9 0.900l-4.3-4.500l0.9-0.800l2 0.100l2.2-1.900l-0.3-1.700z" fill="#999"/><path d="M3.5 7.600l-3 3.5" stroke="#999" stroke-width="1.4"/></svg>
<svg class="i" style="left:401px;top:291px;" width="17" height="16" viewBox="0 0 17 16"><defs><linearGradient id="g12" x1="0" y1="0" x2="1" y2="1"><stop offset="0" stop-color="#4cc4f8"/><stop offset="1" stop-color="#1d9be8"/></linearGradient></defs><rect x="1" y="2" width="15" height="9.5" fill="url(#g12)" stroke="#6a7e8c" stroke-width="0.9"/><path d="M6.5 12.5h4v1.500h-4z" fill="#8aa0b0"/><path d="M3.5 14.500h10" stroke="#7e97aa" stroke-width="1"/></svg>
<span class="t" style="left:422px;top:291px;letter-spacing:0.020px;">Этот компьютер</span>
<svg class="i" style="left:401px;top:323px;" width="17" height="16" viewBox="0 0 17 16"><defs><linearGradient id="g13" x1="0" y1="0" x2="1" y2="1"><stop offset="0" stop-color="#55c2f5"/><stop offset="1" stop-color="#1f8fdf"/></linearGradient></defs><circle cx="11" cy="5.5" r="5" fill="#3a8fd4" stroke="#2b6fae" stroke-width="0.6"/><path d="M8 2.500c1.5 0.5 2 2 1.5 3.500s1 2 2.5 1.500c1-0.3 2-1 2.5-2" fill="none" stroke="#9fd6a6" stroke-width="1.2"/><rect x="0.8" y="6.5" width="10" height="6.5" fill="url(#g13)" stroke="#5d7f99" stroke-width="0.8"/><path d="M4.5 13.500h3v1h-3z" fill="#8aa0b0"/><path d="M2.5 15h7" stroke="#7e97aa" stroke-width="0.9"/></svg>
<span class="t" style="left:422px;top:323px;letter-spacing:-0.568px;">Сеть</span>
<div style="left:535px;top:143px;width:1px;height:521px;background:#f5f5f5;"></div>
<span class="t" style="left:554px;top:148px;color:#4c607a;letter-spacing:0.312px;">Имя</span>
<div style="left:808px;top:144px;width:1px;height:25px;background:#e5e5e5;"></div>
<span class="t" style="left:815px;top:148px;color:#4c607a;letter-spacing:-0.090px;">Дата изменения</span>
<div style="left:928px;top:144px;width:1px;height:25px;background:#e5e5e5;"></div>
<span class="t" style="left:935px;top:148px;color:#4c607a;letter-spacing:0.492px;">Тип</span>
<div style="left:1048px;top:144px;width:1px;height:25px;background:#e5e5e5;"></div>
<span class="t" style="left:1055px;top:148px;color:#4c607a;letter-spacing:-0.050px;">Размер</span>
<div style="left:1128px;top:144px;width:1px;height:25px;background:#e5e5e5;"></div>
<svg class="i" style="left:674.2px;top:142px;" width="9" height="6" viewBox="0 0 9 6"><path d="M0.8 4.8l3.7-3.600l3.7 3.6" fill="none" stroke="#5e5e5e" stroke-width="1.2"/></svg>
<svg class="i" style="left:555px;top:174.7px;" width="16" height="16" viewBox="0 0 16 16"><rect x="0.5" y="2.5" width="15" height="12" fill="#fff" stroke="#8a8a8a" stroke-width="1"/><rect x="1" y="3" width="14" height="1.2" fill="#d4d4d4"/><circle cx="6.3" cy="8.6" r="2.7" fill="#eef2f4" stroke="#98a4ac" stroke-width="0.9"/><circle cx="10.4" cy="10.6" r="2.3" fill="#e0ecf4" stroke="#7ea2c0" stroke-width="0.9"/><circle cx="6.3" cy="8.6" r="0.9" fill="none" stroke="#98a4ac" stroke-width="0.6"/><circle cx="10.4" cy="10.6" r="0.8" fill="none" stroke="#7ea2c0" stroke-width="0.6"/></svg>
<span class="t" style="left:576px;top:177px;letter-spacing:0.203px;">color.bat</span>
<span class="t" style="left:815px;top:177px;color:#6d6d6d;letter-spacing:-0.561px;">27.06.2018 12:55</span>
<span class="t" style="left:935px;top:177px;color:#6d6d6d;letter-spacing:-0.084px;">Пакетный файл ...</span>
<span class="t" style="left:1091px;top:177px;color:#6d6d6d;letter-spacing:-0.387px;">23 КБ</span>
<svg class="i" style="left:555px;top:195.7px;" width="16" height="16" viewBox="0 0 16 16"><rect x="0.5" y="2.5" width="15" height="12" fill="#fff" stroke="#8a8a8a" stroke-width="1"/><rect x="1" y="3" width="14" height="1.2" fill="#d4d4d4"/><circle cx="6.3" cy="8.6" r="2.7" fill="#eef2f4" stroke="#98a4ac" stroke-width="0.9"/><circle cx="10.4" cy="10.6" r="2.3" fill="#e0ecf4" stroke="#7ea2c0" stroke-width="0.9"/><circle cx="6.3" cy="8.6" r="0.9" fill="none" stroke="#98a4ac" stroke-width="0.6"/><circle cx="10.4" cy="10.6" r="0.8" fill="none" stroke="#7ea2c0" stroke-width="0.6"/></svg>
<span class="t" style="left:576px;top:198px;letter-spacing:-0.385px;">HKEY_Killer.bat</span>
<span class="t" style="left:815px;top:198px;color:#6d6d6d;letter-spacing:-0.561px;">28.06.2018 14:46</span>
<span class="t" style="left:935px;top:198px;color:#6d6d6d;letter-spacing:-0.084px;">Пакетный файл ...</span>
<span class="t" style="left:1098px;top:198px;color:#6d6d6d;letter-spacing:-0.625px;">2 КБ</span>
<svg class="i" style="left:555px;top:218px;" width="16" height="17" viewBox="0 0 16 17"><rect x="0.6" y="0.6" width="14.8" height="14.8" fill="#fff" stroke="#222" stroke-width="1.2"/><path d="M0.5 15.600h15M15.5 1v15" stroke="#111" stroke-width="1"/><path d="M11.5 3.500c-2-1.5-6.5-1.5-7 0.500c-0.5 2 6.5 3 6 5.500c-0.4 2.2-5 2.5-7.5 0.8" fill="none" stroke="#0d5f66" stroke-width="3.2" stroke-linecap="round"/><path d="M11.5 3.500c-2-1.5-6.5-1.5-7 0.500c-0.5 2 6.5 3 6 5.500c-0.4 2.2-5 2.5-7.5 0.8" fill="none" stroke="#6fe0dc" stroke-width="1.5" stroke-linecap="round"/><path d="M9 4.500l3-2" stroke="#111" stroke-width="1.2"/></svg>
<span class="t" style="left:576px;top:219px;letter-spacing:-0.115px;">msg.vbs</span>
<span class="t" style="left:815px;top:219px;color:#6d6d6d;letter-spacing:-0.561px;">28.06.2018 14:15</span>
<span class="t" style="left:935px;top:219px;color:#6d6d6d;letter-spacing:-0.098px;">Файл сценария V...</span>
<span class="t" style="left:1098px;top:219px;color:#6d6d6d;letter-spacing:-0.625px;">1 КБ</span>
<svg class="i" style="left:555px;top:239px;" width="16" height="16" viewBox="0 0 16 16"><rect x="0.6" y="1.7" width="14.8" height="12.2" fill="#fff" stroke="#222" stroke-width="1.2"/><path d="M0.5 14.200h15M15.4 2v12.5" stroke="#111" stroke-width="1.1"/><rect x="1.8" y="2.9" width="12.4" height="2.2" fill="#1a1a86"/><path d="M8.5 4h1.200M10.5 4h1.200M12.5 4h1.2" stroke="#fff" stroke-width="0.9"/></svg>
<span class="t" style="left:576px;top:240px;letter-spacing:0.194px;">蓝屏.hta</span>
<span class="t" style="left:815px;top:240px;color:#6d6d6d;letter-spacing:-0.554px;">28.06.2018 7:35</span>
<span class="t" style="left:935px;top:240px;color:#6d6d6d;letter-spacing:0.228px;">HTML приложение</span>
<span class="t" style="left:1098px;top:240px;color:#6d6d6d;letter-spacing:-0.625px;">2 КБ</span></div></div><div style="left:0;top:0;width:786px;height:634px;border:1px solid rgba(10,30,60,.22);box-sizing:border-box;"></div></div>

<div style="left:376px;top:53px;width:786px;height:634px;box-shadow:0 3px 18px rgba(0,0,0,.34);"><div class="win" style="left:1px;top:1px;width:784px;height:632px;"><div style="left:-377px;top:-54px;width:786px;height:634px;"><div style="left:376px;top:53px;width:786px;height:31px;background:#9a0089;"></div>
<svg class="i" style="left:386px;top:60px;" width="16" height="17" viewBox="0 0 16 17"><path d="M1 0.3h12v15.7h-12z" fill="#ffe8a0"/><path d="M1.3 0.6h11.4v15.1h-11.4z" fill="none" stroke="#f7d77e" stroke-width="0.6"/><path d="M10.4 9.5h3.6v6.5h-3.600z" fill="#ffdf85" stroke="#efc050" stroke-width="0.5"/><path d="M1 15.3h13v0.7h-13z" fill="#efc558"/></svg>
<div style="left:407px;top:62px;width:3px;height:13px;border:1px solid #d596cf;box-sizing:border-box;border-radius:1.5px;opacity:.8;"></div>
<svg class="i" style="left:420px;top:60px;" width="13" height="17" viewBox="0 0 13 17"><path d="M0.5 0.5h8l3.5 3.5v12.5h-11.5z" fill="#fff" stroke="#8f8f8f" stroke-width="1"/><path d="M8.5 0.5v3.5h3.5" fill="#e6e6e6" stroke="#8f8f8f" stroke-width="0.8"/><path d="M3 9.5l2.4 2.6l4.4-5.4" fill="none" stroke="#e4572e" stroke-width="1.5"/></svg>
<svg class="i" style="left:441px;top:60px;" width="16" height="17" viewBox="0 0 16 17"><path d="M1 0.3h12v15.7h-12z" fill="#ffe8a0"/><path d="M1.3 0.6h11.4v15.1h-11.4z" fill="none" stroke="#f7d77e" stroke-width="0.6"/><path d="M10.4 9.5h3.6v6.5h-3.600z" fill="#ffdf85" stroke="#efc050" stroke-width="0.5"/><path d="M1 15.3h13v0.7h-13z" fill="#efc558"/></svg>
<svg class="i" style="left:462px;top:66px;" width="9" height="9" viewBox="0 0 9 9"><rect x="0.7" y="1" width="7.6" height="1.3" fill="#f3d3ee"/><path d="M0.7 3.700h7.600l-3.8 4z" fill="#1a0a1a" stroke="#c77bc0" stroke-width="0.5"/></svg>
<div style="left:477px;top:62px;width:3px;height:13px;border:1px solid #d596cf;box-sizing:border-box;border-radius:1.5px;opacity:.8;"></div>
<span class="t" style="left:486px;top:61px;color:#fff;letter-spacing:0.214px;">pack</span>
<svg class="i" style="left:1041px;top:62px;" width="12" height="12" viewBox="0 0 12 12"><path d="M1 6.5h10" stroke="#fff" stroke-width="1"/></svg><svg class="i" style="left:1086px;top:62px;" width="12" height="12" viewBox="0 0 12 12"><rect x="1.5" y="1.5" width="9" height="9" fill="none" stroke="#fff" stroke-width="1"/></svg><svg class="i" style="left:1132px;top:62px;" width="12" height="12" viewBox="0 0 12 12"><path d="M1 1l10 10M11 1l-10 10" stroke="#fff" stroke-width="1.1" fill="none"/></svg>
<div style="left:377px;top:84px;width:56px;height:23px;background:#1979ca;"></div>
<span class="t" style="left:392px;top:88px;color:#fff;letter-spacing:-0.839px;">Файл</span>
<span class="t" style="left:447px;top:88px;color:#3c3c3c;letter-spacing:-0.615px;">Главная</span>
<span class="t" style="left:518px;top:88px;color:#3c3c3c;letter-spacing:-0.418px;">Поделиться</span>
<span class="t" style="left:609px;top:88px;color:#3c3c3c;letter-spacing:-0.609px;">Вид</span>
<div style="left:377px;top:107px;width:784px;height:1px;background:#dadbdc;"></div>
<svg class="i" style="left:1123px;top:92px;" width="10" height="7" viewBox="0 0 10 7"><path d="M0.8 1l4.2 4.2l4.2-4.2" fill="none" stroke="#999" stroke-width="1.1"/></svg>
<svg class="i" style="left:1143px;top:88px;" width="14" height="14" viewBox="0 0 14 14"><circle cx="7" cy="7" r="7" fill="#1a73c7"/><path d="M4.9 5.3c0-1.5 1-2.3 2.2-2.3c1.3 0 2.2 0.8 2.2 1.9c0 1.6-2 1.7-2 3.5" fill="none" stroke="#fff" stroke-width="1.6"/><circle cx="7.2" cy="10.7" r="1" fill="#fff"/></svg>
<svg class="i" style="left:390px;top:119px;" width="13" height="12" viewBox="0 0 13 12"><path d="M12.5 6h-11M6.3 1l-5 5l5 5" fill="none" stroke="#6b6b6b" stroke-width="1.9"/></svg>
<svg class="i" style="left:419px;top:119px;" width="13" height="12" viewBox="0 0 13 12"><path d="M0.5 6h11M6.7 1l5 5l-5 5" fill="none" stroke="#c6c6c6" stroke-width="1.9"/></svg>
<svg class="i" style="left:445px;top:121px;" width="8" height="6" viewBox="0 0 8 6"><path d="M0.8 1.200l3.2 3.200l3.2-3.2" fill="none" stroke="#6e6e6e" stroke-width="1.6"/></svg>
<svg class="i" style="left:463px;top:118px;" width="14" height="14" viewBox="0 0 14 14"><path d="M7 13.500v-11.500M1.5 7.200l5.5-5.500l5.5 5.5" fill="none" stroke="#6b6b6b" stroke-width="1.9"/></svg>
<div style="left:483px;top:114px;width:452px;height:22px;border:1px solid #d9d9d9;box-sizing:border-box;background:#fff;"></div>
<div style="left:917px;top:115px;width:1px;height:20px;background:#d9d9d9;"></div>
<svg class="i" style="left:487px;top:116px;" width="16" height="17" viewBox="0 0 16 17"><path d="M1 0.3h12v15.7h-12z" fill="#ffe8a0"/><path d="M1.3 0.6h11.4v15.1h-11.4z" fill="none" stroke="#f7d77e" stroke-width="0.6"/><path d="M10.4 9.5h3.6v6.5h-3.600z" fill="#ffdf85" stroke="#efc050" stroke-width="0.5"/><path d="M1 15.3h13v0.7h-13z" fill="#efc558"/></svg>
<svg class="i" style="left:507px;top:121px;" width="9" height="8" viewBox="0 0 9 8"><path d="M3.8 1.200l-2.8 2.800l2.8 2.800M8 1.200l-2.8 2.800l2.8 2.8" fill="none" stroke="#5a5a5a" stroke-width="1.3"/></svg>
<span class="t" style="left:523px;top:117px;letter-spacing:-0.030px;">Пользователи</span>
<svg class="i" style="left:609px;top:121px;" width="6" height="8" viewBox="0 0 6 8"><path d="M1 0.800l3.2 3.200l-3.2 3.2" fill="none" stroke="#686868" stroke-width="1.5"/></svg>
<span class="t" style="left:624px;top:117px;letter-spacing:-0.215px;">александр</span>
<svg class="i" style="left:689px;top:121px;" width="6" height="8" viewBox="0 0 6 8"><path d="M1 0.800l3.2 3.200l-3.2 3.2" fill="none" stroke="#686868" stroke-width="1.5"/></svg>
<span class="t" style="left:704px;top:117px;letter-spacing:0.100px;">Загрузки</span>
<svg class="i" style="left:761px;top:121px;" width="6" height="8" viewBox="0 0 6 8"><path d="M1 0.800l3.2 3.200l-3.2 3.2" fill="none" stroke="#686868" stroke-width="1.5"/></svg>
<span class="t" style="left:776px;top:117px;letter-spacing:-0.115px;">test</span>
<svg class="i" style="left:803px;top:121px;" width="6" height="8" viewBox="0 0 6 8"><path d="M1 0.800l3.2 3.200l-3.2 3.2" fill="none" stroke="#686868" stroke-width="1.5"/></svg>
<span class="t" style="left:818px;top:117px;letter-spacing:0.047px;">pack</span>
<svg class="i" style="left:904.7px;top:122.3px;" width="11" height="8" viewBox="0 0 11 8"><path d="M0.9 1.200l4.3 4.300l4.3-4.3" fill="none" stroke="#5e5e5e" stroke-width="1.8"/></svg>
<svg class="i" style="left:920px;top:118px;" width="14" height="14" viewBox="0 0 14 14"><path d="M9.4 4.500A4.4 4.4 0 1 1 4.6 4.4" fill="none" stroke="#6b6b6b" stroke-width="1.5"/><path d="M3.2 2.700h4.500v4.3" fill="none" stroke="#6b6b6b" stroke-width="1.5"/></svg>
<div style="left:947px;top:114px;width:202px;height:22px;border:1px solid #d9d9d9;box-sizing:border-box;background:#fff;"></div>
<span class="t" style="left:956px;top:117px;color:#6d6d6d;letter-spacing:0.172px;">Поиск: pack</span>
<svg class="i" style="left:1128px;top:119px;" width="13" height="13" viewBox="0 0 13 13"><circle cx="8" cy="4.7" r="3.3" fill="none" stroke="#6b6b6b" stroke-width="1.5"/><path d="M5.6 7.2l-4.6 4.6" stroke="#6b6b6b" stroke-width="1.9" fill="none"/></svg>
<svg class="i" style="left:402px;top:163px;" width="17" height="16" viewBox="0 0 17 16"><path d="M10.2 2.600l1.3 3.500l3.7 0.200l-2.9 2.300l1 3.600l-3.1-2l-3.1 2l1-3.600l-2.9-2.300l3.7-0.200z" fill="#3a9ae8" stroke="#2c86d6" stroke-width="0.7" transform="rotate(12 10 8)"/><path d="M3.2 5.500l3-0.800M1.5 8.200l4-1M2.2 11l4-1.600M4.5 13.300l3-1.5" stroke="#4aa6ee" stroke-width="1"/></svg>
<span class="t" style="left:422px;top:163px;letter-spacing:-0.088px;">Быстрый доступ</span>
<svg class="i" style="left:409px;top:187px;" width="17" height="16" viewBox="0 0 17 16"><defs><linearGradient id="g14" x1="0" y1="0" x2="1" y2="1"><stop offset="0" stop-color="#2aa8f2"/><stop offset="1" stop-color="#1a8ee8"/></linearGradient></defs><rect x="0" y="2.2" width="16" height="11.6" fill="url(#g14)"/><rect x="0" y="11.8" width="16" height="2" fill="#1477d0"/><rect x="1.5" y="12.3" width="1" height="1" fill="#fff"/><rect x="13.5" y="12.3" width="1" height="1" fill="#fff"/></svg>
<span class="t" style="left:430px;top:187px;letter-spacing:0.061px;">Рабочий стол</span>
<svg class="i" style="left:520px;top:189px;" width="11" height="12" viewBox="0 0 11 12"><path d="M6.2 0.600l4.2 4.200l-1.2 0.800l-1.5-0.300l-1.9 2.200l0.1 2l-0.9 0.900l-4.3-4.500l0.9-0.800l2 0.100l2.2-1.900l-0.3-1.700z" fill="#999"/><path d="M3.5 7.600l-3 3.5" stroke="#999" stroke-width="1.4"/></svg>
<svg class="i" style="left:409px;top:211px;" width="17" height="16" viewBox="0 0 17 16"><path d="M2.5 0.500h7.500l3 3v12h-10.500z" fill="#fff" stroke="#9a9a9a" stroke-width="1"/><path d="M10 0.500v3h3" fill="#f4f4f4" stroke="#9a9a9a" stroke-width="0.8"/><path d="M4.5 4.500h3M4.5 6.500h7M4.5 8.500h7M4.5 10.500h7M4.5 12.500h7" stroke="#4a90d8" stroke-width="1"/><path d="M8.5 4.500h1.500M9 10.500h2.5" stroke="#35506a" stroke-width="1"/></svg>
<span class="t" style="left:430px;top:211px;letter-spacing:0.143px;">Документы</span>
<svg class="i" style="left:520px;top:213px;" width="11" height="12" viewBox="0 0 11 12"><path d="M6.2 0.600l4.2 4.200l-1.2 0.800l-1.5-0.300l-1.9 2.200l0.1 2l-0.9 0.900l-4.3-4.500l0.9-0.800l2 0.100l2.2-1.900l-0.3-1.700z" fill="#999"/><path d="M3.5 7.600l-3 3.5" stroke="#999" stroke-width="1.4"/></svg>
<svg class="i" style="left:409px;top:235px;" width="17" height="16" viewBox="0 0 17 16"><path d="M5.5 0.400h5v7.100h5.100l-7.6 8.300l-7.6-8.300h5.100z" fill="#2f8fe4"/><path d="M5.5 0.400h5v7.100h5.100l-7.6 8.3" fill="none" stroke="#2279cc" stroke-width="0.5"/></svg>
<span class="t" style="left:430px;top:235px;letter-spacing:0.100px;">Загрузки</span>
<svg class="i" style="left:520px;top:237px;" width="11" height="12" viewBox="0 0 11 12"><path d="M6.2 0.600l4.2 4.200l-1.2 0.800l-1.5-0.300l-1.9 2.200l0.1 2l-0.9 0.900l-4.3-4.500l0.9-0.800l2 0.100l2.2-1.900l-0.3-1.700z" fill="#999"/><path d="M3.5 7.600l-3 3.5" stroke="#999" stroke-width="1.4"/></svg>
<svg class="i" style="left:409px;top:259px;" width="17" height="16" viewBox="0 0 17 16"><defs><linearGradient id="g15" x1="0" y1="0" x2="0" y2="1"><stop offset="0" stop-color="#bfe0f4"/><stop offset="0.450" stop-color="#7fb4d4"/><stop offset="0.550" stop-color="#3f6474"/><stop offset="0.8" stop-color="#5a8a86"/><stop offset="1" stop-color="#a8c8b8"/></linearGradient></defs><rect x="0.4" y="2.7" width="15.2" height="10.8" fill="#fff" stroke="#9c9c9c" stroke-width="0.8"/><rect x="2" y="4.3" width="12" height="7.6" fill="url(#g15)"/></svg>
<span class="t" style="left:430px;top:259px;letter-spacing:0.058px;">Изображения</span>
<svg class="i" style="left:520px;top:261px;" width="11" height="12" viewBox="0 0 11 12"><path d="M6.2 0.600l4.2 4.200l-1.2 0.800l-1.5-0.300l-1.9 2.200l0.1 2l-0.9 0.900l-4.3-4.500l0.9-0.800l2 0.100l2.2-1.900l-0.3-1.700z" fill="#999"/><path d="M3.5 7.600l-3 3.5" stroke="#999" stroke-width="1.4"/></svg>
<div style="left:377px;top:287px;width:156px;height:24px;background:#d9d9d9;"></div>
<svg class="i" style="left:401px;top:291px;" width="17" height="16" viewBox="0 0 17 16"><defs><linearGradient id="g16" x1="0" y1="0" x2="1" y2="1"><stop offset="0" stop-color="#4cc4f8"/><stop offset="1" stop-color="#1d9be8"/></linearGradient></defs><rect x="1" y="2" width="15" height="9.5" fill="url(#g16)" stroke="#6a7e8c" stroke-width="0.9"/><path d="M6.5 12.5h4v1.500h-4z" fill="#8aa0b0"/><path d="M3.5 14.500h10" stroke="#7e97aa" stroke-width="1"/></svg>
<span class="t" style="left:422px;top:291px;letter-spacing:0.020px;">Этот компьютер</span>
<svg class="i" style="left:401px;top:323px;" width="17" height="16" viewBox="0 0 17 16"><defs><linearGradient id="g17" x1="0" y1="0" x2="1" y2="1"><stop offset="0" stop-color="#55c2f5"/><stop offset="1" stop-color="#1f8fdf"/></linearGradient></defs><circle cx="11" cy="5.5" r="5" fill="#3a8fd4" stroke="#2b6fae" stroke-width="0.6"/><path d="M8 2.500c1.5 0.5 2 2 1.5 3.500s1 2 2.5 1.500c1-0.3 2-1 2.5-2" fill="none" stroke="#9fd6a6" stroke-width="1.2"/><rect x="0.8" y="6.5" width="10" height="6.5" fill="url(#g17)" stroke="#5d7f99" stroke-width="0.8"/><path d="M4.5 13.500h3v1h-3z" fill="#8aa0b0"/><path d="M2.5 15h7" stroke="#7e97aa" stroke-width="0.9"/></svg>
<span class="t" style="left:422px;top:323px;letter-spacing:-0.568px;">Сеть</span>
<div style="left:535px;top:143px;width:1px;height:521px;background:#f5f5f5;"></div>
<div style="left:551px;top:149px;width:250px;height:56px;border:1px solid #a3d0ee;box-sizing:border-box;background:#fff;"></div>
<svg class="i" style="left:588px;top:153px;" width="48" height="48" viewBox="0 0 48 48"><defs><linearGradient id="g18" x1="0" y1="0" x2="1" y2="0"><stop offset="0" stop-color="#fafbfc"/><stop offset="1" stop-color="#cfd4dc"/></linearGradient><radialGradient id="g19" cx="0.5" cy="0.5" r="0.5"><stop offset="0" stop-color="#f4f0ff"/><stop offset="0.3" stop-color="#d6d0fa"/><stop offset="0.7" stop-color="#b4acf2"/><stop offset="1" stop-color="#a09ae6"/></radialGradient><linearGradient id="g20" x1="0" y1="0" x2="0" y2="1"><stop offset="0" stop-color="#5fb0f4"/><stop offset="1" stop-color="#b4deff"/></linearGradient><linearGradient id="g21" x1="0" y1="0" x2="0.2" y2="1"><stop offset="0" stop-color="#a4d4ff"/><stop offset="0.55" stop-color="#8fb4f0"/><stop offset="1" stop-color="#7878c4"/></linearGradient><linearGradient id="g22" x1="0" y1="0" x2="0" y2="1"><stop offset="0" stop-color="#6ae848"/><stop offset="1" stop-color="#0c9a10"/></linearGradient></defs><path d="M3.9 3.300l21.8-2.900l1.9 7.200l-16.8 3.800z" fill="url(#g21)" stroke="#8aa0c4" stroke-width="0.5"/><path d="M28.9 2.300l9.6 1l-2.8 6.800l-8.7-1.800z" fill="#f0f0fa" stroke="#7a7a8a" stroke-width="0.7"/><path d="M3.2 4.500l7 8v34.500l-6.6-4.400z" fill="url(#g18)" stroke="#b0b4bc" stroke-width="0.5"/><path d="M10.1 16.400l17-3.200v30l-17 3.800z" fill="url(#g20)"/><path d="M10.1 47l17-3.8" stroke="#8a8e96" stroke-width="0.9" fill="none"/><path d="M10.7 11.400l16.9-3.800l12 5l-27 3.800z" fill="#f6f6f8" stroke="#c4c4cc" stroke-width="0.5"/><path d="M13.2 25.100l7-0.600v4.400h-7z" fill="#ff9a30"/><path d="M13.2 28.900h7.600v10.600l-7.6 1.300z" fill="url(#g22)"/><path d="M6.1 19.500l1.8 0.600v5l-1.8-0.600z" fill="#1080e8"/><path d="M5.3 15l1.8 1v3l-1.8-1zM5.3 37l1.8 1v3l-1.8-1z" fill="#dfe3e8"/><g transform="translate(34.1 31.3) scale(1.030 1.120) translate(-33.1 -30.3)"><circle cx="33.3" cy="30.6" r="13.5" fill="#55558a"/><circle cx="33.1" cy="30.3" r="12.9" fill="url(#g19)"/><path d="M33.1 30.300l-11.7-5.400a12.9 12.9 0 0 1 9.2-7.300z" fill="#fff" opacity="0.850"/><path d="M33.1 30.300l11.7 5.400a12.9 12.9 0 0 1-9.2 7.300z" fill="#fff" opacity="0.650"/><path d="M33.1 30.300l2.5-12.600a12.9 12.9 0 0 1 8.8 6.600z" fill="#a49cf0" opacity="0.7"/><path d="M33.1 30.300l-2.5 12.600a12.9 12.9 0 0 1-8.8-6.600z" fill="#a49cf0" opacity="0.7"/><circle cx="33.1" cy="30.3" r="4.6" fill="#fbeeff" opacity="0.950"/><circle cx="33.1" cy="30.3" r="2.7" fill="#5a5a9c"/><circle cx="33.1" cy="30.3" r="1.4" fill="#d4dcf4"/></g></svg>
<span class="t" style="left:642px;top:153px;letter-spacing:-0.606px;">01.exe</span>
<span class="t" style="left:642px;top:169px;color:#6d6d6d;letter-spacing:0.074px;">Mozilla Foundation</span>
<span class="t" style="left:642px;top:185px;color:#6d6d6d;letter-spacing:-0.541px;">51.0.1.6234</span>
<svg class="i" style="left:588px;top:213px;" width="48" height="48" viewBox="0 0 48 48"><rect x="8.7" y="7.5" width="33" height="33.2" fill="#7acbe3" stroke="#2d9cc4" stroke-width="1"/><path d="M15 21.800c0.5 6.3 4.5 10 11.5 9.8" fill="none" stroke="#e4f6fc" stroke-width="2.9" stroke-linecap="round"/><ellipse cx="22" cy="20" rx="2.3" ry="3.3" fill="#e8f8fd" stroke="#4aaed0" stroke-width="0.6" transform="rotate(-8 22 20)"/><ellipse cx="27.7" cy="17.8" rx="2.3" ry="3.9" fill="#e8f8fd" stroke="#4aaed0" stroke-width="0.6"/><ellipse cx="33.8" cy="21.3" rx="2.3" ry="4" fill="#e8f8fd" stroke="#4aaed0" stroke-width="0.6" transform="rotate(14 33.8 21.3)"/><path d="M36.7 24.800c3.2 2.3 6.4 3.2 10.4 3.400c0.5 9.5-3.4 15-10.4 18.600c-7-3.6-10.9-9.1-10.4-18.600c4-0.2 7.2-1.1 10.4-3.400z" fill="#fff" stroke="#5a4a2a" stroke-width="0.9"/><path d="M36 26.300v8.300h-8.800c-0.2-1.8-0.2-3.4-0.1-5.500c3.3-0.3 6.3-1.1 8.9-2.800z" fill="#1465c8"/><path d="M37.5 26.300c2.6 1.7 5.5 2.5 8.8 2.800c0.1 2.1 0.1 3.7-0.1 5.500h-8.700z" fill="#ffb930"/><path d="M37.5 36.200h8.400c-1.2 4.2-3.9 7-8.4 9.300z" fill="#1465c8"/><path d="M36 36.200v9.300c-4.5-2.3-7.2-5.1-8.4-9.300z" fill="#ffb930"/></svg>
<span class="t" style="left:642px;top:213px;letter-spacing:-0.606px;">06.exe</span>
<span class="t" style="left:642px;top:229px;color:#6d6d6d;letter-spacing:-0.561px;">28.06.2018 20:35</span>
<span class="t" style="left:642px;top:245px;color:#6d6d6d;letter-spacing:-0.447px;">995 КБ</span>
<svg class="i" style="left:588px;top:273px;" width="48" height="48" viewBox="0 0 48 48"><defs><linearGradient id="g23" x1="0" y1="0" x2="0.3" y2="1"><stop offset="0" stop-color="#fbfcff"/><stop offset="0.450" stop-color="#e6ecfc"/><stop offset="1" stop-color="#b4c8f4"/></linearGradient><linearGradient id="g24" x1="0" y1="1" x2="1" y2="0"><stop offset="0" stop-color="#5a8ee0"/><stop offset="0.5" stop-color="#a8ccf8"/><stop offset="1" stop-color="#6a9ee8"/></linearGradient></defs><path d="M3.8 2h24.700l8.5 8.500v35.300h-33.200c-0.5 0-1-0.5-1-1v-41.800c0-0.5 0.5-1 1-1z" fill="url(#g23)" stroke="#a4b8ec" stroke-width="1"/><path d="M28.5 2l8.5 8.500h-6.500c-1.2 0-2-0.8-2-2z" fill="#5a9cec"/><rect x="6.8" y="21.6" width="26" height="5.2" rx="0.8" fill="#7eaaee" stroke="#6a98e4" stroke-width="0.5"/><rect x="6.8" y="29" width="26" height="5.2" rx="0.8" fill="#7eaaee" stroke="#6a98e4" stroke-width="0.5"/><rect x="6.8" y="36.4" width="26" height="5.2" rx="0.8" fill="#7eaaee" stroke="#6a98e4" stroke-width="0.5"/><path d="M10 24.200h19M10 31.600h19M10 39h19" stroke="#dfeaff" stroke-width="1.9"/><path d="M24.5 37.200l15.8-15.600l3.2 3.200l-15.8 15.600z" fill="url(#g24)" stroke="#4a78c0" stroke-width="0.8"/><path d="M40.3 21.600l1.3-1.300c1.6-1.6 4.8 1.6 3.2 3.200l-1.3 1.300z" fill="#e8744a"/><path d="M22.5 39.900l2-2.700l3.2 3.200z" fill="#4a4a4a"/><rect x="41.5" y="47" width="2.5" height="0.8" fill="#111"/><rect x="45" y="47" width="1" height="0.8" fill="#111"/></svg>
<span class="t" style="left:642px;top:273px;letter-spacing:-0.428px;">11.exe</span>
<span class="t" style="left:642px;top:289px;color:#6d6d6d;letter-spacing:-0.194px;">ELectrum</span>
<span class="t" style="left:642px;top:305px;color:#6d6d6d;letter-spacing:0.109px;">NIrSoft</span>
<svg class="i" style="left:588px;top:333px;" width="48" height="48" viewBox="0 0 48 48"><defs><linearGradient id="g25" x1="0" y1="0" x2="0" y2="1"><stop offset="0" stop-color="#f6d088"/><stop offset="1" stop-color="#d89840"/></linearGradient><linearGradient id="g26" x1="0" y1="0" x2="1" y2="0.3"><stop offset="0" stop-color="#38a8d8"/><stop offset="0.5" stop-color="#6cc8ec"/><stop offset="1" stop-color="#2a98cc"/></linearGradient><linearGradient id="g27" x1="0" y1="0" x2="0" y2="1"><stop offset="0" stop-color="#2c62c0"/><stop offset="1" stop-color="#5a9ae4"/></linearGradient></defs><path d="M26.4 2l17.5 3.800v9.300l-17.5-3.100z" fill="#cfe0f2"/><path d="M27.2 3.200l4.3 0.900v7.700l-4.3-0.800zM32.8 4.400l4.3 0.900v7.700l-4.3-0.800zM38.4 5.600l4.3 0.900v7.700l-4.3-0.800z" fill="url(#g27)"/><path d="M12 12.300l6-2.200l5.5 2v10l-6 2.400l-5.5-2.700z" fill="url(#g25)" stroke="#b07c2c" stroke-width="0.5"/><path d="M12.8 15l3.8 1.400M12.8 18l3.8 1.400M12.8 21l3.8 1.4" stroke="#a8742c" stroke-width="0.7"/><path d="M21 13c1-2 3-2.5 5-1.500l17 8.500c1.5 1 2 3 1 5l-3 3l-21-11z" fill="url(#g25)" stroke="#b07c2c" stroke-width="0.5"/><path d="M2.6 33.200l21.9-12.500l13.8 5l-16.3 12.500z" fill="url(#g26)" stroke="#2a88b8" stroke-width="0.5"/><path d="M23.2 22l8.8-1.300l2.5 2.500l-7.5 1.900z" fill="#e03ac8"/><path d="M2.6 33.200l19.4 5v6.300l-19.4-6.200z" fill="#e8b058" stroke="#a8742c" stroke-width="0.5"/><path d="M22 38.200l16.3-12.500v5l-16.3 13.800z" fill="#d09038" stroke="#a8742c" stroke-width="0.5"/><path d="M3 35.500l19 5.2" stroke="#f8d898" stroke-width="0.8"/><path d="M27 42l12.5-8.800l7 2.600l-12 9.300z" fill="#c84434" stroke="#a02c20" stroke-width="0.5"/><path d="M38.3 25.500l5-2l4.3 1.600v6l-5 2.600l-4.3-2.200z" fill="url(#g25)" stroke="#b07c2c" stroke-width="0.5"/><path d="M40.5 24c0-2.5 1-4.5 2.5-5.500c0 2 1.5 2.5 4 2.200c-1 2-3 3.6-6.5 3.300z" fill="#5a9a4a"/><path d="M41.5 24.500c1.5-0.2 3-0.3 4.5 0.500c-1.5 1.3-3 1.3-4.5-0.500z" fill="#a83a5a"/></svg>
<span class="t" style="left:642px;top:333px;letter-spacing:-0.606px;">21.exe</span>
<span class="t" style="left:642px;top:349px;color:#6d6d6d;letter-spacing:0.051px;">Payduring Are</span>
<span class="t" style="left:642px;top:365px;color:#6d6d6d;letter-spacing:-0.169px;">Celldo ECi Software Solutio</span>
<svg class="i" style="left:842px;top:153px;" width="48" height="48" viewBox="0 0 48 48"><defs><linearGradient id="g28" x1="0" y1="0" x2="0" y2="1"><stop offset="0" stop-color="#d81818"/><stop offset="0.350" stop-color="#b00c0c"/><stop offset="0.6" stop-color="#c41212"/><stop offset="1" stop-color="#e02020"/></linearGradient><radialGradient id="g29" cx="0.550" cy="0.150" r="0.450"><stop offset="0" stop-color="#ff4838" stop-opacity="0.9"/><stop offset="1" stop-color="#ff4838" stop-opacity="0"/></radialGradient></defs><path d="M5 0.500h38c2 0 4 2 4 4v34l-5 9h-34c-4 0-7-3-7-7v-36c0-2 2-4 4-4z" fill="#8e2222"/><path d="M6 0.500h37c2 0 4 2 4 4v37c0 2-2 4-4 4h-36c-2 0-4-2-4-4v-37c0-2 1-4 3-4z" fill="url(#g28)"/><rect x="3" y="0.5" width="44" height="45" rx="4" fill="url(#g29)"/><path d="M22 30c3-2 9-1.5 12 3l2 8c0 3-1 4.5-3 4.500h-19c3-4 5-11 8-15.500z" fill="#f02a22" opacity="0.8"/><path d="M22.5 3.500c-0.8 5 0 12 0.3 17.5" fill="none" stroke="#f4b4b0" stroke-width="2.2" stroke-linecap="round"/><path d="M22.8 21c-3 6-8 12-13.3 15.5" fill="none" stroke="#f0a8a4" stroke-width="2.6" stroke-linecap="round"/><path d="M22.8 21c3 4 7 6 11 5.500c3-0.4 5 0 6 1.5" fill="none" stroke="#e89490" stroke-width="2.2" stroke-linecap="round"/><path d="M19 23c2-1.6 5-1.6 7.5 0" fill="none" stroke="#f4b4b0" stroke-width="1.6"/><path d="M36 42.500l10.5-9v5.500l-3.5 5.500z" fill="#d8d4d4"/><path d="M36 42.500l6-5l3 4.500l-2 3z" fill="#a8a0a0" opacity="0.7"/></svg>
<span class="t" style="left:896px;top:153px;letter-spacing:-0.606px;">02.exe</span>
<span class="t" style="left:896px;top:169px;color:#6d6d6d;letter-spacing:-0.336px;">Specify Re Unavailableexce...</span>
<span class="t" style="left:896px;top:185px;color:#6d6d6d;letter-spacing:-0.059px;">Joerg Mueller</span>
<svg class="i" style="left:842px;top:213px;" width="48" height="48" viewBox="0 0 48 48"><defs><linearGradient id="g30" x1="0" y1="0" x2="0" y2="1"><stop offset="0" stop-color="#fbfcfd"/><stop offset="1" stop-color="#e4e7ea"/></linearGradient></defs><path d="M7.5 44h36v1.200h-36z" fill="#c8c8c8" opacity="0.7"/><path d="M8 1.800h27.500l8.3 8.300v33.400c0 0.5-0.5 1-1 1h-34.800c-0.5 0-1-0.5-1-1v-40.700c0-0.5 0.5-1 1-1z" fill="url(#g30)" stroke="#b0b6bc" stroke-width="1"/><path d="M35.5 1.800v6.300c0 1 1 2 2 2h6.3" fill="#f6f7f8" stroke="#b8bcc0" stroke-width="0.8"/><rect x="12" y="6.8" width="23" height="4.2" fill="#a4d0e4"/><path d="M12 16h25M12 19.100h21M12 22h25M12 25.100h25M12 28h17M12 31.100h25M12 34.100h22M12 37h25" stroke="#c4c8cc" stroke-width="1.3"/></svg>
<span class="t" style="left:896px;top:213px;letter-spacing:-0.606px;">09.exe</span>
<span class="t" style="left:896px;top:229px;color:#6d6d6d;letter-spacing:-0.155px;">document_secure Setup</span>
<span class="t" style="left:896px;top:245px;color:#6d6d6d;letter-spacing:-0.116px;">document_secure.</span>
<svg class="i" style="left:842px;top:273px;" width="48" height="48" viewBox="0 0 48 48"><defs><linearGradient id="g31" x1="0" y1="0" x2="0.3" y2="1"><stop offset="0" stop-color="#fbfcff"/><stop offset="0.450" stop-color="#e6ecfc"/><stop offset="1" stop-color="#b4c8f4"/></linearGradient><linearGradient id="g32" x1="0" y1="1" x2="1" y2="0"><stop offset="0" stop-color="#5a8ee0"/><stop offset="0.5" stop-color="#a8ccf8"/><stop offset="1" stop-color="#6a9ee8"/></linearGradient></defs><path d="M3.8 2h24.700l8.5 8.500v35.300h-33.200c-0.5 0-1-0.5-1-1v-41.800c0-0.5 0.5-1 1-1z" fill="url(#g31)" stroke="#a4b8ec" stroke-width="1"/><path d="M28.5 2l8.5 8.500h-6.500c-1.2 0-2-0.8-2-2z" fill="#5a9cec"/><rect x="6.8" y="21.6" width="26" height="5.2" rx="0.8" fill="#7eaaee" stroke="#6a98e4" stroke-width="0.5"/><rect x="6.8" y="29" width="26" height="5.2" rx="0.8" fill="#7eaaee" stroke="#6a98e4" stroke-width="0.5"/><rect x="6.8" y="36.4" width="26" height="5.2" rx="0.8" fill="#7eaaee" stroke="#6a98e4" stroke-width="0.5"/><path d="M10 24.200h19M10 31.600h19M10 39h19" stroke="#dfeaff" stroke-width="1.9"/><path d="M24.5 37.200l15.8-15.600l3.2 3.200l-15.8 15.600z" fill="url(#g32)" stroke="#4a78c0" stroke-width="0.8"/><path d="M40.3 21.600l1.3-1.300c1.6-1.6 4.8 1.6 3.2 3.200l-1.3 1.300z" fill="#e8744a"/><path d="M22.5 39.900l2-2.700l3.2 3.200z" fill="#4a4a4a"/><rect x="43.3" y="27.8" width="1.6" height="0.9" fill="#111"/></svg>
<span class="t" style="left:896px;top:273px;letter-spacing:-0.606px;">13.exe</span>
<span class="t" style="left:896px;top:289px;color:#6d6d6d;letter-spacing:-0.049px;">Electrum</span>
<span class="t" style="left:896px;top:305px;color:#6d6d6d;letter-spacing:0.052px;">NirSoft</span>
<svg class="i" style="left:842px;top:333px;" width="48" height="48" viewBox="0 0 48 48"><defs><linearGradient id="g33" x1="0" y1="0" x2="0.3" y2="1"><stop offset="0" stop-color="#4a7cac"/><stop offset="0.350" stop-color="#3e8a84"/><stop offset="1" stop-color="#5cb470"/></linearGradient><linearGradient id="g34" x1="0" y1="0" x2="0" y2="1"><stop offset="0" stop-color="#4a7cb4"/><stop offset="1" stop-color="#62b470"/></linearGradient></defs><path d="M3 41.500h43v1.200h-43z" fill="#bbb" opacity="0.6"/><rect x="2.6" y="5.6" width="43" height="35" rx="1.5" fill="#f4f4f4" stroke="#8a8a8a" stroke-width="1.2"/><rect x="3.5" y="6.5" width="41.2" height="3" fill="#d8d8d8"/><path d="M34 7.200h2M37.8 7.200h2M41.5 7.200h2" stroke="#666" stroke-width="1"/><rect x="6.5" y="13" width="18.5" height="22.5" fill="url(#g33)" stroke="#a8c4c0" stroke-width="0.7"/><path d="M6.8 22c4-3.5 10-5 18-4.500v-4.300h-18z" fill="#fff" opacity="0.120"/><path d="M28.5 13.500h8M28.5 15.800h8M28.5 18.100h8M28.5 20.400h8M28.5 22.700h8M28.5 25h8M28.5 29.500h8M28.5 31.800h8M28.5 34.100h8" stroke="#d0d0d0" stroke-width="1"/><rect x="39" y="13" width="4" height="14.5" fill="url(#g34)"/></svg>
<span class="t" style="left:896px;top:333px;letter-spacing:-0.606px;">22.exe</span>
<span class="t" style="left:896px;top:349px;color:#6d6d6d;letter-spacing:-0.617px;">0.0.0.0</span>
<span class="t" style="left:896px;top:365px;color:#6d6d6d;letter-spacing:-0.561px;">28.06.2018 20:35</span>
<span class="t" style="left:391px;top:667px;color:#1e395b;letter-spacing:-0.247px;">Элементов: 8</span>
<div style="left:473px;top:667px;width:1px;height:15px;background:#f0f0f0;"></div>
<svg class="i" style="left:1116px;top:667px;" width="17" height="14" viewBox="0 0 17 14"><rect x="0.5" y="0.5" width="4" height="4" fill="#fff" stroke="#8a8a8a" stroke-width="0.9"/><rect x="2" y="2" width="1" height="1" fill="#444"/><path d="M6 2.5h4M12 2.5h4" stroke="#666" stroke-width="1"/><rect x="0.5" y="4.5" width="4" height="4" fill="#fff" stroke="#8a8a8a" stroke-width="0.9"/><rect x="2" y="6" width="1" height="1" fill="#6aa"/><path d="M6 6.5h4M12 6.5h4" stroke="#666" stroke-width="1"/><rect x="0.5" y="8.5" width="4" height="4" fill="#fff" stroke="#8a8a8a" stroke-width="0.9"/><rect x="2" y="10" width="1" height="1" fill="#a33"/><path d="M6 10.5h4M12 10.5h4" stroke="#666" stroke-width="1"/></svg>
<svg class="i" style="left:1139px;top:667px;" width="16" height="14" viewBox="0 0 16 14"><defs><linearGradient id="g35" x1="0" y1="0" x2="0" y2="1"><stop offset="0" stop-color="#4a90e0"/><stop offset="0.45" stop-color="#a8ccec"/><stop offset="0.6" stop-color="#3f6e68"/><stop offset="1" stop-color="#6a9ab8"/></linearGradient></defs><rect x="0.5" y="1.5" width="13" height="10" fill="#fff" stroke="#8a8a8a" stroke-width="1"/><rect x="2" y="3" width="10" height="7" fill="url(#g35)"/></svg></div></div><div style="left:0;top:0;width:786px;height:1px;background:#9a0089;"></div><div style="left:0;top:0;width:1px;height:634px;background:linear-gradient(#9a0089 0,#9a0089 31px,#8f2a86 31px);"></div><div style="left:785px;top:0;width:1px;height:634px;background:linear-gradient(#9a0089 0,#9a0089 31px,#8f2a86 31px);"></div><div style="left:0;top:633px;width:786px;height:1px;background:#8f2a86;"></div></div>

</div>
</body>
</html>
